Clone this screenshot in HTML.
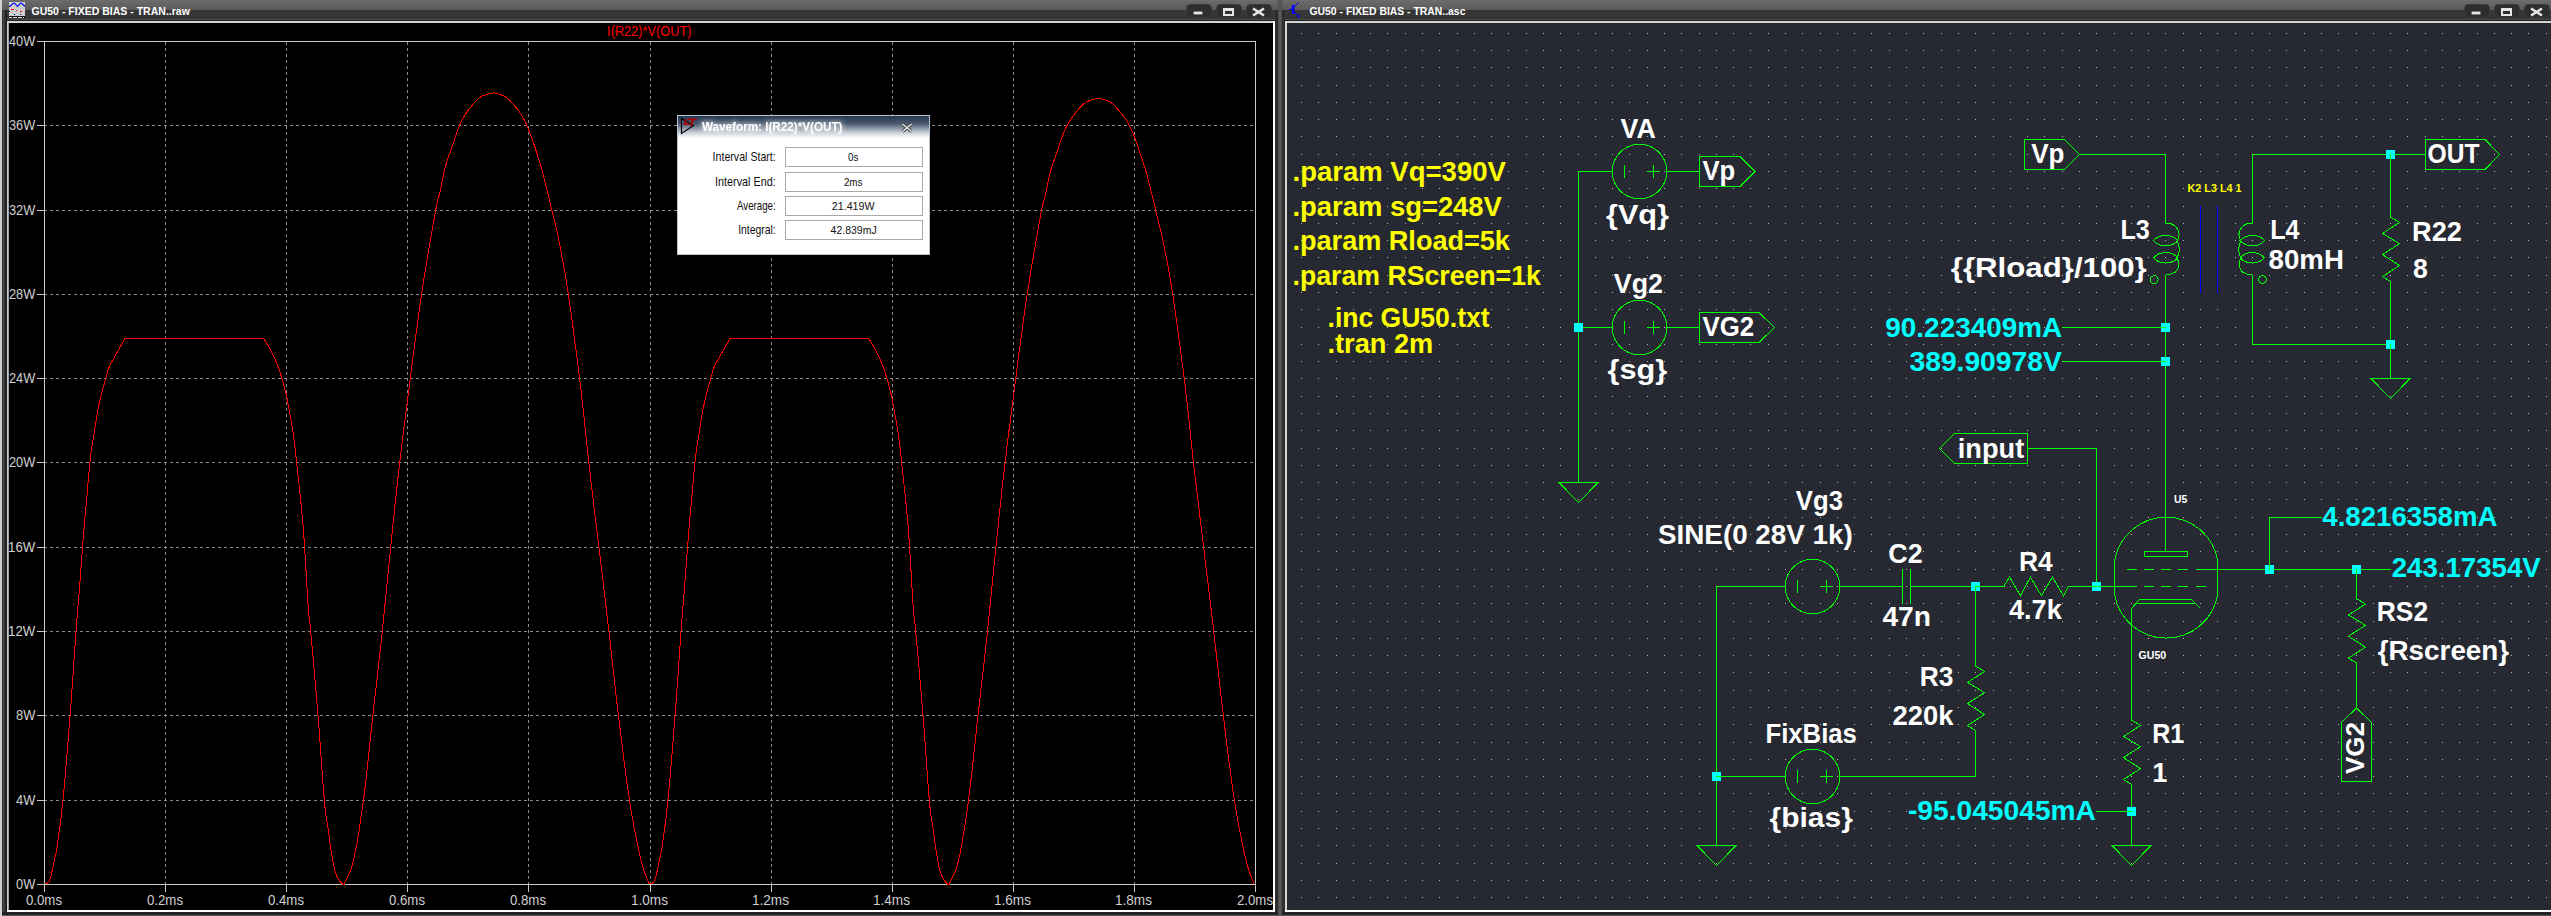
<!DOCTYPE html>
<html><head><meta charset="utf-8"><style>
html,body{margin:0;padding:0;background:#2b2b2b;width:2551px;height:916px;overflow:hidden}
svg{display:block;font-family:"Liberation Sans", sans-serif}
</style></head><body>
<svg width="2551" height="916" viewBox="0 0 2551 916">
<defs><filter id="glow" x="-20%" y="-80%" width="140%" height="260%"><feMorphology in="SourceAlpha" operator="dilate" radius="1" result="d"/><feGaussianBlur in="d" stdDeviation="2.5" result="b"/><feFlood flood-color="#ffffff" flood-opacity="0.45"/><feComposite in2="b" operator="in"/><feMerge><feMergeNode/><feMergeNode in="SourceGraphic"/></feMerge></filter></defs>
<rect x="0" y="0" width="2551" height="916" fill="#2b2b2b" />
<rect x="0" y="0" width="2" height="916" fill="#d0d0d0" />
<defs><linearGradient id="tb" x1="0" y1="0" x2="0" y2="1"><stop offset="0" stop-color="#6c6c6c"/><stop offset="1" stop-color="#5a5a5a"/></linearGradient><linearGradient id="dlg" x1="0" y1="0" x2="0" y2="1"><stop offset="0" stop-color="#24364e"/><stop offset="0.35" stop-color="#4a5a70"/><stop offset="0.75" stop-color="#c8ced6"/><stop offset="1" stop-color="#ffffff"/></linearGradient></defs>
<rect x="2" y="0" width="2549" height="10" fill="url(#tb)" />
<rect x="2" y="10" width="2549" height="9" fill="#363636" />
<rect x="2" y="19" width="2549" height="1" fill="#4a4a4a" />
<rect x="2" y="20" width="2549" height="1" fill="#1e1e1e" />
<rect x="2" y="10" width="1" height="916" fill="#2e2e2e" />
<rect x="3" y="10" width="1" height="916" fill="#4a4a4a" />
<rect x="4" y="10" width="1" height="916" fill="#333333" />
<rect x="5" y="10" width="1" height="916" fill="#2a2a2a" />
<rect x="6" y="10" width="1" height="916" fill="#1c1c1c" />
<rect x="1275" y="10" width="10" height="916" fill="#2d2d2d" />
<rect x="1278" y="0" width="4" height="916" fill="#4c4c4c" />
<rect x="1279" y="0" width="2" height="916" fill="#575757" />
<rect x="7" y="21" width="1268" height="891" fill="#ffffff" />
<rect x="7" y="21" width="1266" height="2" fill="#d4d4d4" />
<rect x="7" y="21" width="1" height="889" fill="#d0d0d0" />
<rect x="8" y="23" width="1" height="887" fill="#a0a0a0" />
<rect x="9" y="23" width="1264" height="887" fill="#000000" />
<rect x="1285" y="21" width="1266" height="891" fill="#ffffff" />
<rect x="1285" y="21" width="1266" height="2" fill="#d4d4d4" />
<rect x="1285" y="21" width="2" height="889" fill="#d4d4d4" />
<rect x="1287" y="23" width="1264" height="887" fill="#262932" />
<rect x="2" y="912" width="2549" height="3" fill="#232323" />
<rect x="2" y="915" width="2549" height="1" fill="#585858" />
<rect x="1278" y="910" width="4" height="6" fill="#4c4c4c" />
<rect x="1279" y="910" width="2" height="6" fill="#575757" />
<rect x="1186.5" y="4.5" width="25" height="13" rx="4" fill="#2e2e2e" stroke="#3a3a3a" stroke-width="1"/>
<rect x="1216.5" y="4.5" width="25" height="13" rx="4" fill="#2e2e2e" stroke="#3a3a3a" stroke-width="1"/>
<rect x="1246.5" y="4.5" width="25" height="13" rx="4" fill="#2e2e2e" stroke="#3a3a3a" stroke-width="1"/>
<rect x="2464.5" y="4.5" width="25" height="13" rx="4" fill="#2e2e2e" stroke="#3a3a3a" stroke-width="1"/>
<rect x="2494.5" y="4.5" width="25" height="13" rx="4" fill="#2e2e2e" stroke="#3a3a3a" stroke-width="1"/>
<rect x="2524.5" y="4.5" width="25" height="13" rx="4" fill="#2e2e2e" stroke="#3a3a3a" stroke-width="1"/>
<rect x="1193" y="11" width="10" height="4" fill="#000" opacity="0.6"/>
<rect x="1193.5" y="11.5" width="9" height="3" fill="#e6e6e6" />
<rect x="1224" y="9" width="9" height="6" fill="none" stroke="#e6e6e6" stroke-width="2"/>
<rect x="1223" y="8" width="11" height="3" fill="#e6e6e6" />
<path d="M1253,8.5 L1264,15.5 M1264,8.5 L1253,15.5" stroke="#e6e6e6" stroke-width="2.6" fill="none"/>
<rect x="2471" y="11" width="10" height="4" fill="#000" opacity="0.6"/>
<rect x="2471.5" y="11.5" width="9" height="3" fill="#e6e6e6" />
<rect x="2502" y="9" width="9" height="6" fill="none" stroke="#e6e6e6" stroke-width="2"/>
<rect x="2501" y="8" width="11" height="3" fill="#e6e6e6" />
<path d="M2531,8.5 L2542,15.5 M2542,8.5 L2531,15.5" stroke="#e6e6e6" stroke-width="2.6" fill="none"/>
<rect x="9" y="2" width="16" height="14" fill="#cccccc" />
<rect x="9" y="16" width="16" height="2" fill="#111111" />
<rect x="9" y="17" width="3" height="1" fill="#d8d8d8" />
<rect x="13" y="17" width="4" height="1" fill="#d8d8d8" />
<rect x="18" y="17" width="4" height="1" fill="#d8d8d8" />
<rect x="23" y="17" width="1" height="1" fill="#d8d8d8" />
<polyline points="9.5,6.5 13.4,3.3 14.7,3.3 17.5,6.5 20.3,3.3 21.6,3.3 24.9,6.5" fill="none" stroke="#0000ff" stroke-width="1.1"/>
<rect x="9" y="6" width="1" height="1" fill="#000000" />
<rect x="9" y="11" width="1" height="1" fill="#000000" />
<rect x="11" y="9" width="3" height="1" fill="#ff0000" />
<rect x="16" y="10" width="1" height="1" fill="#ff0000" />
<rect x="20" y="11" width="2" height="1" fill="#ff0000" />
<rect x="14" y="14" width="1" height="1" fill="#00008b" />
<rect x="20" y="14" width="1" height="1" fill="#00008b" />
<path d="M1289,9.5 L1293,9.5 M1294.5,6.5 L1299,2 M1294.5,12.5 L1300,17.5" stroke="#0000ff" stroke-width="1" fill="none"/>
<rect x="1292" y="5" width="2.5" height="9" fill="#0000ff" />
<polygon points="1300,17.5 1296.5,16.5 1298.5,14" fill="#0000ff"/>
<line x1="165.5" y1="41" x2="165.5" y2="884" stroke="#8c8c8c" stroke-width="1" stroke-dasharray="3 3" stroke-dashoffset="-1"/>
<line x1="286.5" y1="41" x2="286.5" y2="884" stroke="#8c8c8c" stroke-width="1" stroke-dasharray="3 3" stroke-dashoffset="-1"/>
<line x1="407.5" y1="41" x2="407.5" y2="884" stroke="#8c8c8c" stroke-width="1" stroke-dasharray="3 3" stroke-dashoffset="-1"/>
<line x1="528.5" y1="41" x2="528.5" y2="884" stroke="#8c8c8c" stroke-width="1" stroke-dasharray="3 3" stroke-dashoffset="-1"/>
<line x1="650.5" y1="41" x2="650.5" y2="884" stroke="#8c8c8c" stroke-width="1" stroke-dasharray="3 3" stroke-dashoffset="-1"/>
<line x1="771.5" y1="41" x2="771.5" y2="884" stroke="#8c8c8c" stroke-width="1" stroke-dasharray="3 3" stroke-dashoffset="-1"/>
<line x1="892.5" y1="41" x2="892.5" y2="884" stroke="#8c8c8c" stroke-width="1" stroke-dasharray="3 3" stroke-dashoffset="-1"/>
<line x1="1013.5" y1="41" x2="1013.5" y2="884" stroke="#8c8c8c" stroke-width="1" stroke-dasharray="3 3" stroke-dashoffset="-1"/>
<line x1="1134.5" y1="41" x2="1134.5" y2="884" stroke="#8c8c8c" stroke-width="1" stroke-dasharray="3 3" stroke-dashoffset="-1"/>
<line x1="44" y1="125.5" x2="1255" y2="125.5" stroke="#8c8c8c" stroke-width="1" stroke-dasharray="3 3" stroke-dashoffset="0"/>
<line x1="44" y1="210.5" x2="1255" y2="210.5" stroke="#8c8c8c" stroke-width="1" stroke-dasharray="3 3" stroke-dashoffset="0"/>
<line x1="44" y1="294.5" x2="1255" y2="294.5" stroke="#8c8c8c" stroke-width="1" stroke-dasharray="3 3" stroke-dashoffset="0"/>
<line x1="44" y1="378.5" x2="1255" y2="378.5" stroke="#8c8c8c" stroke-width="1" stroke-dasharray="3 3" stroke-dashoffset="0"/>
<line x1="44" y1="462.5" x2="1255" y2="462.5" stroke="#8c8c8c" stroke-width="1" stroke-dasharray="3 3" stroke-dashoffset="0"/>
<line x1="44" y1="547.5" x2="1255" y2="547.5" stroke="#8c8c8c" stroke-width="1" stroke-dasharray="3 3" stroke-dashoffset="0"/>
<line x1="44" y1="631.5" x2="1255" y2="631.5" stroke="#8c8c8c" stroke-width="1" stroke-dasharray="3 3" stroke-dashoffset="0"/>
<line x1="44" y1="715.5" x2="1255" y2="715.5" stroke="#8c8c8c" stroke-width="1" stroke-dasharray="3 3" stroke-dashoffset="0"/>
<line x1="44" y1="800.5" x2="1255" y2="800.5" stroke="#8c8c8c" stroke-width="1" stroke-dasharray="3 3" stroke-dashoffset="0"/>
<rect x="44" y="41" width="1212" height="1" fill="#c8c8c8" />
<rect x="44" y="884" width="1212" height="1" fill="#c8c8c8" />
<rect x="44" y="41" width="1" height="844" fill="#c8c8c8" />
<rect x="1255" y="41" width="1" height="844" fill="#c8c8c8" />
<rect x="37" y="41" width="8" height="1" fill="#c8c8c8" />
<rect x="37" y="125" width="8" height="1" fill="#c8c8c8" />
<rect x="37" y="210" width="8" height="1" fill="#c8c8c8" />
<rect x="37" y="294" width="8" height="1" fill="#c8c8c8" />
<rect x="37" y="378" width="8" height="1" fill="#c8c8c8" />
<rect x="37" y="462" width="8" height="1" fill="#c8c8c8" />
<rect x="37" y="547" width="8" height="1" fill="#c8c8c8" />
<rect x="37" y="631" width="8" height="1" fill="#c8c8c8" />
<rect x="37" y="715" width="8" height="1" fill="#c8c8c8" />
<rect x="37" y="800" width="8" height="1" fill="#c8c8c8" />
<rect x="37" y="884" width="8" height="1" fill="#c8c8c8" />
<rect x="44" y="884" width="1" height="8" fill="#c8c8c8" />
<rect x="165" y="884" width="1" height="8" fill="#c8c8c8" />
<rect x="286" y="884" width="1" height="8" fill="#c8c8c8" />
<rect x="407" y="884" width="1" height="8" fill="#c8c8c8" />
<rect x="528" y="884" width="1" height="8" fill="#c8c8c8" />
<rect x="650" y="884" width="1" height="8" fill="#c8c8c8" />
<rect x="771" y="884" width="1" height="8" fill="#c8c8c8" />
<rect x="892" y="884" width="1" height="8" fill="#c8c8c8" />
<rect x="1013" y="884" width="1" height="8" fill="#c8c8c8" />
<rect x="1134" y="884" width="1" height="8" fill="#c8c8c8" />
<rect x="1255" y="884" width="1" height="8" fill="#c8c8c8" />
<polyline points="44.60,884.10 44.92,884.00 45.38,883.86 45.92,883.70 46.49,883.50 47.03,883.27 47.50,883.00 47.89,882.75 48.25,882.53 48.59,882.27 48.91,881.91 49.25,881.37 49.60,880.60 49.97,879.57 50.34,878.34 50.71,876.94 51.10,875.40 51.49,873.74 51.90,872.00 52.33,870.14 52.77,868.12 53.23,865.99 53.69,863.78 54.15,861.54 54.60,859.30 55.00,857.40 55.36,855.87 55.71,854.30 56.11,852.29 56.59,849.42 57.20,845.30 57.95,840.10 58.81,834.17 59.76,827.40 60.77,819.64 61.83,810.75 62.90,800.60 64.03,788.73 65.24,775.15 66.49,760.44 67.74,745.20 68.96,729.99 70.10,715.40 71.19,700.86 72.26,685.80 73.29,670.77 74.27,656.36 75.18,643.11 76.00,631.60 76.70,622.28 77.29,614.77 77.80,608.44 78.28,602.63 78.77,596.70 79.30,590.00 79.88,582.48 80.47,574.65 81.06,566.69 81.66,558.81 82.24,551.18 82.80,544.00 83.32,537.49 83.81,531.53 84.29,525.83 84.78,520.09 85.31,514.02 85.90,507.30 86.59,499.54 87.35,490.89 88.15,481.89 88.95,473.11 89.71,465.10 90.40,458.40 91.00,453.22 91.54,449.17 92.04,445.89 92.52,443.00 93.00,440.16 93.50,437.00 94.03,433.50 94.57,429.94 95.11,426.42 95.64,423.04 96.14,419.90 96.60,417.10 96.99,414.78 97.30,412.88 97.59,411.22 97.90,409.61 98.25,407.87 98.70,405.80 99.25,403.39 99.87,400.79 100.54,398.04 101.25,395.23 101.98,392.39 102.70,389.60 103.44,386.75 104.23,383.76 105.02,380.76 105.82,377.86 106.58,375.17 107.30,372.80 107.84,371.01 108.19,369.76 108.51,368.72 108.96,367.56 109.70,365.97 110.90,363.60 112.81,360.05 115.34,355.48 118.18,350.48 120.96,345.60 123.34,341.41 125.00,338.50 262.60,338.50 262.91,338.70 263.27,338.80 263.73,339.01 264.34,339.52 265.15,340.52 266.20,342.20 267.61,344.71 269.35,347.91 271.29,351.61 273.29,355.59 275.21,359.65 276.90,363.60 278.40,367.58 279.84,371.79 281.19,376.08 282.45,380.31 283.59,384.33 284.60,388.00 285.42,391.07 286.03,393.63 286.54,395.97 287.01,398.42 287.54,401.29 288.20,404.90 289.03,409.42 289.98,414.64 290.98,420.29 291.97,426.08 292.90,431.74 293.70,437.00 294.34,441.67 294.86,445.94 295.31,450.08 295.74,454.37 296.22,459.08 296.80,464.50 297.50,470.82 298.28,477.86 299.11,485.33 299.93,492.92 300.71,500.34 301.40,507.30 301.98,513.43 302.48,518.90 302.94,524.20 303.39,529.82 303.86,536.26 304.40,544.00 305.03,553.82 305.72,565.49 306.44,577.96 307.16,590.23 307.82,601.25 308.40,610.00 308.82,615.41 309.11,618.09 309.34,619.53 309.63,621.22 310.05,624.64 310.70,631.30 311.64,641.65 312.80,654.60 314.10,669.28 315.46,684.85 316.78,700.44 318.00,715.20 319.14,729.94 320.27,745.50 321.37,761.09 322.43,775.91 323.41,789.14 324.30,800.00 325.04,807.80 325.63,813.06 326.14,816.74 326.66,819.81 327.26,823.24 328.00,828.00 328.89,834.38 329.88,841.67 330.94,849.31 332.06,856.78 333.22,863.52 334.40,869.00 335.68,873.21 337.09,876.59 338.54,879.25 339.95,881.30 341.23,882.84 342.30,884.00 343.06,884.50 343.56,884.50 343.93,884.50 344.30,884.09 344.81,882.82 345.60,881.00 346.68,878.83 347.95,876.36 349.36,873.36 350.86,869.59 352.39,864.82 353.90,858.80 355.41,851.47 356.98,843.01 358.57,833.54 360.19,823.19 361.80,812.10 363.40,800.40 364.98,787.74 366.57,773.94 368.16,759.41 369.74,744.51 371.32,729.65 372.90,715.20 374.48,701.12 376.08,687.09 377.67,673.08 379.24,659.09 380.79,645.10 382.30,631.10 383.75,617.08 385.16,603.04 386.53,589.01 387.90,574.99 389.28,560.98 390.70,547.00 392.14,532.99 393.59,518.94 395.06,504.90 396.54,490.94 398.05,477.12 399.60,463.50 401.17,450.27 402.74,437.43 404.35,424.72 406.00,411.91 407.71,398.75 409.50,385.00 411.37,370.46 413.30,355.30 415.29,339.78 417.34,324.19 419.44,308.81 421.60,293.90 423.95,278.75 426.51,263.00 429.14,247.45 431.65,232.91 433.89,220.19 435.70,210.10 436.97,203.33 437.83,199.38 438.41,197.24 438.86,195.93 439.34,194.45 440.00,191.80 440.79,188.03 441.60,183.96 442.43,179.71 443.30,175.43 444.22,171.25 445.20,167.30 446.26,163.60 447.40,160.04 448.59,156.57 449.80,153.17 451.01,149.80 452.20,146.40 453.37,142.92 454.53,139.38 455.70,135.86 456.87,132.45 458.03,129.24 459.20,126.30 460.33,123.71 461.40,121.41 462.48,119.31 463.61,117.31 464.83,115.30 466.20,113.20 467.79,110.92 469.57,108.52 471.45,106.13 473.33,103.84 475.11,101.80 476.70,100.10 478.05,98.80 479.23,97.82 480.31,97.07 481.37,96.48 482.48,95.95 483.70,95.40 485.09,94.85 486.60,94.35 488.16,93.92 489.70,93.57 491.13,93.29 492.40,93.10 493.43,92.98 494.26,92.93 494.99,92.96 495.73,93.08 496.57,93.29 497.60,93.60 498.88,94.02 500.33,94.53 501.89,95.14 503.47,95.84 505.00,96.63 506.40,97.50 507.67,98.47 508.87,99.54 510.02,100.70 511.14,101.93 512.26,103.20 513.40,104.50 514.55,105.80 515.70,107.11 516.85,108.47 518.00,109.91 519.15,111.48 520.30,113.20 521.45,115.03 522.59,116.92 523.74,118.93 524.90,121.13 526.08,123.56 527.30,126.30 528.57,129.42 529.90,132.89 531.25,136.60 532.60,140.44 533.92,144.31 535.20,148.10 536.39,151.64 537.50,154.99 538.59,158.36 539.71,161.97 540.89,166.05 542.20,170.80 543.68,176.50 545.30,183.02 547.00,190.00 548.70,197.08 550.32,203.90 551.80,210.10 553.09,215.35 554.23,219.87 555.31,224.14 556.38,228.60 557.52,233.74 558.80,240.00 560.21,247.16 561.69,254.81 563.23,263.12 564.85,272.29 566.54,282.49 568.30,293.90 570.21,307.08 572.27,321.98 574.41,337.91 576.54,354.19 578.56,370.12 580.40,385.00 582.01,398.75 583.44,411.91 584.78,424.73 586.09,437.43 587.44,450.27 588.90,463.50 590.48,477.12 592.12,490.94 593.81,504.90 595.51,518.94 597.22,532.99 598.90,547.00 600.57,560.98 602.25,574.99 603.93,589.01 605.60,603.04 607.26,617.08 608.90,631.10 610.49,645.10 612.04,659.09 613.58,673.08 615.13,687.09 616.73,701.12 618.40,715.20 620.16,729.65 621.98,744.51 623.84,759.41 625.73,773.94 627.63,787.74 629.50,800.40 631.39,812.07 633.33,823.08 635.28,833.35 637.18,842.79 639.00,851.30 640.70,858.80 642.35,865.21 643.99,870.59 645.55,875.05 646.96,878.70 648.13,881.64 649.00,884.00 652.50,883.00 652.73,882.81 653.04,882.61 653.41,882.34 653.81,881.95 654.21,881.39 654.60,880.60 654.97,879.57 655.34,878.34 655.71,876.94 656.10,875.40 656.49,873.74 656.90,872.00 657.33,870.14 657.77,868.12 658.23,865.99 658.69,863.78 659.15,861.54 659.60,859.30 660.00,857.40 660.36,855.87 660.71,854.30 661.11,852.29 661.59,849.42 662.20,845.30 662.95,840.10 663.81,834.17 664.76,827.40 665.77,819.64 666.83,810.75 667.90,800.60 669.03,788.73 670.24,775.15 671.49,760.44 672.74,745.20 673.96,729.99 675.10,715.40 676.19,700.86 677.26,685.80 678.29,670.77 679.27,656.36 680.18,643.11 681.00,631.60 681.70,622.28 682.29,614.77 682.80,608.44 683.28,602.63 683.77,596.70 684.30,590.00 684.88,582.48 685.47,574.65 686.06,566.69 686.66,558.81 687.24,551.18 687.80,544.00 688.32,537.49 688.81,531.53 689.29,525.83 689.78,520.09 690.31,514.02 690.90,507.30 691.59,499.54 692.35,490.89 693.15,481.89 693.95,473.11 694.71,465.10 695.40,458.40 696.00,453.22 696.54,449.17 697.04,445.89 697.52,443.00 698.00,440.16 698.50,437.00 699.03,433.50 699.57,429.94 700.11,426.42 700.64,423.04 701.14,419.90 701.60,417.10 701.99,414.78 702.30,412.88 702.59,411.22 702.90,409.61 703.25,407.87 703.70,405.80 704.25,403.39 704.87,400.79 705.54,398.04 706.25,395.23 706.98,392.39 707.70,389.60 708.44,386.75 709.23,383.76 710.03,380.76 710.82,377.86 711.58,375.17 712.30,372.80 712.84,371.01 713.19,369.76 713.51,368.72 713.96,367.56 714.70,365.97 715.90,363.60 717.81,360.05 720.34,355.48 723.18,350.48 725.96,345.60 728.34,341.41 730.00,338.50 867.60,338.50 867.91,338.70 868.27,338.80 868.73,339.01 869.34,339.52 870.15,340.52 871.20,342.20 872.61,344.71 874.35,347.91 876.29,351.61 878.29,355.59 880.21,359.65 881.90,363.60 883.40,367.58 884.84,371.79 886.19,376.08 887.45,380.31 888.59,384.33 889.60,388.00 890.42,391.07 891.03,393.63 891.54,395.97 892.01,398.42 892.54,401.29 893.20,404.90 894.03,409.42 894.98,414.64 895.98,420.29 896.97,426.08 897.90,431.74 898.70,437.00 899.34,441.67 899.86,445.94 900.31,450.08 900.74,454.37 901.22,459.08 901.80,464.50 902.50,470.82 903.28,477.86 904.11,485.33 904.93,492.92 905.71,500.34 906.40,507.30 906.98,513.43 907.48,518.90 907.94,524.20 908.39,529.82 908.86,536.26 909.40,544.00 910.03,553.82 910.72,565.49 911.44,577.96 912.16,590.23 912.82,601.25 913.40,610.00 913.82,615.41 914.11,618.09 914.34,619.53 914.63,621.22 915.05,624.64 915.70,631.30 916.64,641.65 917.80,654.60 919.10,669.28 920.46,684.85 921.78,700.44 923.00,715.20 924.14,729.94 925.27,745.50 926.37,761.09 927.43,775.91 928.41,789.14 929.30,800.00 930.04,807.80 930.63,813.06 931.14,816.74 931.66,819.81 932.26,823.24 933.00,828.00 933.89,834.38 934.88,841.67 935.94,849.31 937.06,856.78 938.22,863.52 939.40,869.00 940.68,873.21 942.09,876.59 943.54,879.25 944.95,881.29 946.23,882.84 947.30,884.00 948.06,884.50 948.56,884.50 948.92,884.50 949.30,884.09 949.81,882.83 950.60,881.02 951.68,878.87 952.95,876.42 954.36,873.44 955.86,869.69 957.39,864.95 958.90,858.98 960.41,851.70 961.98,843.30 963.57,833.89 965.19,823.62 966.80,812.61 968.40,800.99 969.98,788.41 971.57,774.72 973.16,760.28 974.74,745.49 976.32,730.73 977.90,716.38 979.48,702.40 981.08,688.47 982.67,674.56 984.24,660.67 985.79,646.78 987.30,632.87 988.75,618.95 990.16,605.02 991.53,591.08 992.90,577.16 994.28,563.25 995.70,549.37 997.14,535.45 998.59,521.50 1000.06,507.56 1001.54,493.70 1003.05,479.98 1004.60,466.45 1006.17,453.32 1007.74,440.56 1009.35,427.95 1011.00,415.23 1012.71,402.16 1014.50,388.50 1016.37,374.07 1018.30,359.01 1020.29,343.60 1022.34,328.12 1024.44,312.84 1026.60,298.04 1028.95,283.00 1031.51,267.36 1034.14,251.92 1036.65,237.48 1038.89,224.85 1040.70,214.83 1041.97,208.11 1042.83,204.18 1043.41,202.06 1043.86,200.76 1044.34,199.29 1045.00,196.66 1045.79,192.92 1046.60,188.87 1047.43,184.66 1048.30,180.40 1049.22,176.25 1050.20,172.33 1051.26,168.65 1052.40,165.12 1053.59,161.68 1054.80,158.30 1056.01,154.95 1057.20,151.58 1058.37,148.12 1059.53,144.61 1060.70,141.11 1061.87,137.73 1063.03,134.53 1064.20,131.62 1065.33,129.05 1066.40,126.77 1067.48,124.68 1068.61,122.69 1069.83,120.70 1071.20,118.61 1072.79,116.35 1074.57,113.96 1076.45,111.58 1078.33,109.32 1080.11,107.29 1081.70,105.60 1083.05,104.31 1084.23,103.34 1085.31,102.60 1086.37,102.00 1087.48,101.48 1088.70,100.93 1090.09,100.38 1091.60,99.89 1093.16,99.47 1094.70,99.12 1096.13,98.84 1097.40,98.65 1098.43,98.53 1099.26,98.49 1099.99,98.51 1100.73,98.63 1101.57,98.84 1102.60,99.15 1103.88,99.56 1105.33,100.07 1106.89,100.68 1108.47,101.38 1110.00,102.16 1111.40,103.02 1112.67,103.98 1113.87,105.05 1115.02,106.20 1116.14,107.41 1117.26,108.68 1118.40,109.97 1119.55,111.26 1120.70,112.56 1121.85,113.91 1123.00,115.34 1124.15,116.90 1125.30,118.61 1126.45,120.42 1127.59,122.30 1128.74,124.30 1129.90,126.48 1131.08,128.90 1132.30,131.62 1133.57,134.72 1134.90,138.16 1136.25,141.85 1137.60,145.66 1138.92,149.51 1140.20,153.26 1141.39,156.78 1142.50,160.10 1143.59,163.45 1144.71,167.04 1145.89,171.08 1147.20,175.81 1148.68,181.46 1150.30,187.94 1152.00,194.87 1153.70,201.90 1155.32,208.67 1156.80,214.83 1158.09,220.04 1159.23,224.54 1160.31,228.77 1161.38,233.20 1162.52,238.30 1163.80,244.52 1165.21,251.63 1166.69,259.23 1168.23,267.48 1169.85,276.58 1171.54,286.71 1173.30,298.04 1175.21,311.13 1177.27,325.92 1179.41,341.75 1181.54,357.91 1183.56,373.72 1185.40,388.50 1187.01,402.16 1188.44,415.23 1189.78,427.95 1191.09,440.56 1192.44,453.32 1193.90,466.45 1195.48,479.98 1197.12,493.70 1198.81,507.56 1200.51,521.50 1202.22,535.45 1203.90,549.37 1205.57,563.25 1207.25,577.16 1208.93,591.08 1210.60,605.02 1212.26,618.95 1213.90,632.87 1215.49,646.78 1217.04,660.67 1218.58,674.56 1220.13,688.47 1221.73,702.40 1223.40,716.38 1225.16,730.73 1226.98,745.49 1228.84,760.28 1230.73,774.72 1232.63,788.41 1234.50,800.99 1236.39,812.57 1238.33,823.51 1240.28,833.71 1242.18,843.07 1244.00,851.53 1245.70,858.98 1247.35,865.34 1248.99,870.69 1250.55,875.11 1251.96,878.73 1253.13,881.66 1254.00,884.00" fill="none" stroke="#ff0000" stroke-width="1" shape-rendering="crispEdges" stroke-linejoin="round"/>
<rect x="677" y="115" width="253" height="140" fill="#ffffff" />
<rect x="677.5" y="115.5" width="252" height="139" fill="none" stroke="#b9c3cf" stroke-width="1"/>
<rect x="678" y="116" width="251" height="22" fill="url(#dlg)" />
<polygon points="681.5,118.5 681.5,133.5 693.5,125.5" fill="none" stroke="#000000" stroke-width="1.2"/>
<polygon points="685.5,119 687.5,119 685.8,123.5 689.5,123.5 689,125 683.5,125" fill="#b00000"/>
<polygon points="688.5,118.5 697,118.5 696.3,120.3 693.8,120.3 691.5,126 689.6,126 691.9,120.3 688,120.3" fill="#b00000"/>
<path d="M902.5,124 L911.5,131.5 M911.5,124 L902.5,131.5" stroke="#3a3a3a" stroke-width="3.2" fill="none"/>
<path d="M902.5,124 L911.5,131.5 M911.5,124 L902.5,131.5" stroke="#e8e8e8" stroke-width="1.6" fill="none"/>
<rect x="785.5" y="147.5" width="137" height="19" fill="#ffffff" stroke="#a9a9a9" stroke-width="1"/>
<rect x="785.5" y="172.5" width="137" height="19" fill="#ffffff" stroke="#a9a9a9" stroke-width="1"/>
<rect x="785.5" y="196.5" width="137" height="19" fill="#ffffff" stroke="#a9a9a9" stroke-width="1"/>
<rect x="785.5" y="220.5" width="137" height="19" fill="#ffffff" stroke="#a9a9a9" stroke-width="1"/>
<path d="M1301,33h1v1h-1zM1301,50h1v1h-1zM1301,67h1v1h-1zM1301,85h1v1h-1zM1301,102h1v1h-1zM1301,119h1v1h-1zM1301,136h1v1h-1zM1301,154h1v1h-1zM1301,171h1v1h-1zM1301,188h1v1h-1zM1301,206h1v1h-1zM1301,223h1v1h-1zM1301,240h1v1h-1zM1301,257h1v1h-1zM1301,275h1v1h-1zM1301,292h1v1h-1zM1301,309h1v1h-1zM1301,327h1v1h-1zM1301,344h1v1h-1zM1301,361h1v1h-1zM1301,378h1v1h-1zM1301,396h1v1h-1zM1301,413h1v1h-1zM1301,430h1v1h-1zM1301,448h1v1h-1zM1301,465h1v1h-1zM1301,482h1v1h-1zM1301,499h1v1h-1zM1301,517h1v1h-1zM1301,534h1v1h-1zM1301,551h1v1h-1zM1301,569h1v1h-1zM1301,586h1v1h-1zM1301,603h1v1h-1zM1301,621h1v1h-1zM1301,638h1v1h-1zM1301,655h1v1h-1zM1301,672h1v1h-1zM1301,690h1v1h-1zM1301,707h1v1h-1zM1301,724h1v1h-1zM1301,742h1v1h-1zM1301,759h1v1h-1zM1301,776h1v1h-1zM1301,793h1v1h-1zM1301,811h1v1h-1zM1301,828h1v1h-1zM1301,845h1v1h-1zM1301,863h1v1h-1zM1301,880h1v1h-1zM1301,897h1v1h-1zM1318,33h1v1h-1zM1318,50h1v1h-1zM1318,67h1v1h-1zM1318,85h1v1h-1zM1318,102h1v1h-1zM1318,119h1v1h-1zM1318,136h1v1h-1zM1318,154h1v1h-1zM1318,171h1v1h-1zM1318,188h1v1h-1zM1318,206h1v1h-1zM1318,223h1v1h-1zM1318,240h1v1h-1zM1318,257h1v1h-1zM1318,275h1v1h-1zM1318,292h1v1h-1zM1318,309h1v1h-1zM1318,327h1v1h-1zM1318,344h1v1h-1zM1318,361h1v1h-1zM1318,378h1v1h-1zM1318,396h1v1h-1zM1318,413h1v1h-1zM1318,430h1v1h-1zM1318,448h1v1h-1zM1318,465h1v1h-1zM1318,482h1v1h-1zM1318,499h1v1h-1zM1318,517h1v1h-1zM1318,534h1v1h-1zM1318,551h1v1h-1zM1318,569h1v1h-1zM1318,586h1v1h-1zM1318,603h1v1h-1zM1318,621h1v1h-1zM1318,638h1v1h-1zM1318,655h1v1h-1zM1318,672h1v1h-1zM1318,690h1v1h-1zM1318,707h1v1h-1zM1318,724h1v1h-1zM1318,742h1v1h-1zM1318,759h1v1h-1zM1318,776h1v1h-1zM1318,793h1v1h-1zM1318,811h1v1h-1zM1318,828h1v1h-1zM1318,845h1v1h-1zM1318,863h1v1h-1zM1318,880h1v1h-1zM1318,897h1v1h-1zM1336,33h1v1h-1zM1336,50h1v1h-1zM1336,67h1v1h-1zM1336,85h1v1h-1zM1336,102h1v1h-1zM1336,119h1v1h-1zM1336,136h1v1h-1zM1336,154h1v1h-1zM1336,171h1v1h-1zM1336,188h1v1h-1zM1336,206h1v1h-1zM1336,223h1v1h-1zM1336,240h1v1h-1zM1336,257h1v1h-1zM1336,275h1v1h-1zM1336,292h1v1h-1zM1336,309h1v1h-1zM1336,327h1v1h-1zM1336,344h1v1h-1zM1336,361h1v1h-1zM1336,378h1v1h-1zM1336,396h1v1h-1zM1336,413h1v1h-1zM1336,430h1v1h-1zM1336,448h1v1h-1zM1336,465h1v1h-1zM1336,482h1v1h-1zM1336,499h1v1h-1zM1336,517h1v1h-1zM1336,534h1v1h-1zM1336,551h1v1h-1zM1336,569h1v1h-1zM1336,586h1v1h-1zM1336,603h1v1h-1zM1336,621h1v1h-1zM1336,638h1v1h-1zM1336,655h1v1h-1zM1336,672h1v1h-1zM1336,690h1v1h-1zM1336,707h1v1h-1zM1336,724h1v1h-1zM1336,742h1v1h-1zM1336,759h1v1h-1zM1336,776h1v1h-1zM1336,793h1v1h-1zM1336,811h1v1h-1zM1336,828h1v1h-1zM1336,845h1v1h-1zM1336,863h1v1h-1zM1336,880h1v1h-1zM1336,897h1v1h-1zM1353,33h1v1h-1zM1353,50h1v1h-1zM1353,67h1v1h-1zM1353,85h1v1h-1zM1353,102h1v1h-1zM1353,119h1v1h-1zM1353,136h1v1h-1zM1353,154h1v1h-1zM1353,171h1v1h-1zM1353,188h1v1h-1zM1353,206h1v1h-1zM1353,223h1v1h-1zM1353,240h1v1h-1zM1353,257h1v1h-1zM1353,275h1v1h-1zM1353,292h1v1h-1zM1353,309h1v1h-1zM1353,327h1v1h-1zM1353,344h1v1h-1zM1353,361h1v1h-1zM1353,378h1v1h-1zM1353,396h1v1h-1zM1353,413h1v1h-1zM1353,430h1v1h-1zM1353,448h1v1h-1zM1353,465h1v1h-1zM1353,482h1v1h-1zM1353,499h1v1h-1zM1353,517h1v1h-1zM1353,534h1v1h-1zM1353,551h1v1h-1zM1353,569h1v1h-1zM1353,586h1v1h-1zM1353,603h1v1h-1zM1353,621h1v1h-1zM1353,638h1v1h-1zM1353,655h1v1h-1zM1353,672h1v1h-1zM1353,690h1v1h-1zM1353,707h1v1h-1zM1353,724h1v1h-1zM1353,742h1v1h-1zM1353,759h1v1h-1zM1353,776h1v1h-1zM1353,793h1v1h-1zM1353,811h1v1h-1zM1353,828h1v1h-1zM1353,845h1v1h-1zM1353,863h1v1h-1zM1353,880h1v1h-1zM1353,897h1v1h-1zM1370,33h1v1h-1zM1370,50h1v1h-1zM1370,67h1v1h-1zM1370,85h1v1h-1zM1370,102h1v1h-1zM1370,119h1v1h-1zM1370,136h1v1h-1zM1370,154h1v1h-1zM1370,171h1v1h-1zM1370,188h1v1h-1zM1370,206h1v1h-1zM1370,223h1v1h-1zM1370,240h1v1h-1zM1370,257h1v1h-1zM1370,275h1v1h-1zM1370,292h1v1h-1zM1370,309h1v1h-1zM1370,327h1v1h-1zM1370,344h1v1h-1zM1370,361h1v1h-1zM1370,378h1v1h-1zM1370,396h1v1h-1zM1370,413h1v1h-1zM1370,430h1v1h-1zM1370,448h1v1h-1zM1370,465h1v1h-1zM1370,482h1v1h-1zM1370,499h1v1h-1zM1370,517h1v1h-1zM1370,534h1v1h-1zM1370,551h1v1h-1zM1370,569h1v1h-1zM1370,586h1v1h-1zM1370,603h1v1h-1zM1370,621h1v1h-1zM1370,638h1v1h-1zM1370,655h1v1h-1zM1370,672h1v1h-1zM1370,690h1v1h-1zM1370,707h1v1h-1zM1370,724h1v1h-1zM1370,742h1v1h-1zM1370,759h1v1h-1zM1370,776h1v1h-1zM1370,793h1v1h-1zM1370,811h1v1h-1zM1370,828h1v1h-1zM1370,845h1v1h-1zM1370,863h1v1h-1zM1370,880h1v1h-1zM1370,897h1v1h-1zM1387,33h1v1h-1zM1387,50h1v1h-1zM1387,67h1v1h-1zM1387,85h1v1h-1zM1387,102h1v1h-1zM1387,119h1v1h-1zM1387,136h1v1h-1zM1387,154h1v1h-1zM1387,171h1v1h-1zM1387,188h1v1h-1zM1387,206h1v1h-1zM1387,223h1v1h-1zM1387,240h1v1h-1zM1387,257h1v1h-1zM1387,275h1v1h-1zM1387,292h1v1h-1zM1387,309h1v1h-1zM1387,327h1v1h-1zM1387,344h1v1h-1zM1387,361h1v1h-1zM1387,378h1v1h-1zM1387,396h1v1h-1zM1387,413h1v1h-1zM1387,430h1v1h-1zM1387,448h1v1h-1zM1387,465h1v1h-1zM1387,482h1v1h-1zM1387,499h1v1h-1zM1387,517h1v1h-1zM1387,534h1v1h-1zM1387,551h1v1h-1zM1387,569h1v1h-1zM1387,586h1v1h-1zM1387,603h1v1h-1zM1387,621h1v1h-1zM1387,638h1v1h-1zM1387,655h1v1h-1zM1387,672h1v1h-1zM1387,690h1v1h-1zM1387,707h1v1h-1zM1387,724h1v1h-1zM1387,742h1v1h-1zM1387,759h1v1h-1zM1387,776h1v1h-1zM1387,793h1v1h-1zM1387,811h1v1h-1zM1387,828h1v1h-1zM1387,845h1v1h-1zM1387,863h1v1h-1zM1387,880h1v1h-1zM1387,897h1v1h-1zM1405,33h1v1h-1zM1405,50h1v1h-1zM1405,67h1v1h-1zM1405,85h1v1h-1zM1405,102h1v1h-1zM1405,119h1v1h-1zM1405,136h1v1h-1zM1405,154h1v1h-1zM1405,171h1v1h-1zM1405,188h1v1h-1zM1405,206h1v1h-1zM1405,223h1v1h-1zM1405,240h1v1h-1zM1405,257h1v1h-1zM1405,275h1v1h-1zM1405,292h1v1h-1zM1405,309h1v1h-1zM1405,327h1v1h-1zM1405,344h1v1h-1zM1405,361h1v1h-1zM1405,378h1v1h-1zM1405,396h1v1h-1zM1405,413h1v1h-1zM1405,430h1v1h-1zM1405,448h1v1h-1zM1405,465h1v1h-1zM1405,482h1v1h-1zM1405,499h1v1h-1zM1405,517h1v1h-1zM1405,534h1v1h-1zM1405,551h1v1h-1zM1405,569h1v1h-1zM1405,586h1v1h-1zM1405,603h1v1h-1zM1405,621h1v1h-1zM1405,638h1v1h-1zM1405,655h1v1h-1zM1405,672h1v1h-1zM1405,690h1v1h-1zM1405,707h1v1h-1zM1405,724h1v1h-1zM1405,742h1v1h-1zM1405,759h1v1h-1zM1405,776h1v1h-1zM1405,793h1v1h-1zM1405,811h1v1h-1zM1405,828h1v1h-1zM1405,845h1v1h-1zM1405,863h1v1h-1zM1405,880h1v1h-1zM1405,897h1v1h-1zM1422,33h1v1h-1zM1422,50h1v1h-1zM1422,67h1v1h-1zM1422,85h1v1h-1zM1422,102h1v1h-1zM1422,119h1v1h-1zM1422,136h1v1h-1zM1422,154h1v1h-1zM1422,171h1v1h-1zM1422,188h1v1h-1zM1422,206h1v1h-1zM1422,223h1v1h-1zM1422,240h1v1h-1zM1422,257h1v1h-1zM1422,275h1v1h-1zM1422,292h1v1h-1zM1422,309h1v1h-1zM1422,327h1v1h-1zM1422,344h1v1h-1zM1422,361h1v1h-1zM1422,378h1v1h-1zM1422,396h1v1h-1zM1422,413h1v1h-1zM1422,430h1v1h-1zM1422,448h1v1h-1zM1422,465h1v1h-1zM1422,482h1v1h-1zM1422,499h1v1h-1zM1422,517h1v1h-1zM1422,534h1v1h-1zM1422,551h1v1h-1zM1422,569h1v1h-1zM1422,586h1v1h-1zM1422,603h1v1h-1zM1422,621h1v1h-1zM1422,638h1v1h-1zM1422,655h1v1h-1zM1422,672h1v1h-1zM1422,690h1v1h-1zM1422,707h1v1h-1zM1422,724h1v1h-1zM1422,742h1v1h-1zM1422,759h1v1h-1zM1422,776h1v1h-1zM1422,793h1v1h-1zM1422,811h1v1h-1zM1422,828h1v1h-1zM1422,845h1v1h-1zM1422,863h1v1h-1zM1422,880h1v1h-1zM1422,897h1v1h-1zM1439,33h1v1h-1zM1439,50h1v1h-1zM1439,67h1v1h-1zM1439,85h1v1h-1zM1439,102h1v1h-1zM1439,119h1v1h-1zM1439,136h1v1h-1zM1439,154h1v1h-1zM1439,171h1v1h-1zM1439,188h1v1h-1zM1439,206h1v1h-1zM1439,223h1v1h-1zM1439,240h1v1h-1zM1439,257h1v1h-1zM1439,275h1v1h-1zM1439,292h1v1h-1zM1439,309h1v1h-1zM1439,327h1v1h-1zM1439,344h1v1h-1zM1439,361h1v1h-1zM1439,378h1v1h-1zM1439,396h1v1h-1zM1439,413h1v1h-1zM1439,430h1v1h-1zM1439,448h1v1h-1zM1439,465h1v1h-1zM1439,482h1v1h-1zM1439,499h1v1h-1zM1439,517h1v1h-1zM1439,534h1v1h-1zM1439,551h1v1h-1zM1439,569h1v1h-1zM1439,586h1v1h-1zM1439,603h1v1h-1zM1439,621h1v1h-1zM1439,638h1v1h-1zM1439,655h1v1h-1zM1439,672h1v1h-1zM1439,690h1v1h-1zM1439,707h1v1h-1zM1439,724h1v1h-1zM1439,742h1v1h-1zM1439,759h1v1h-1zM1439,776h1v1h-1zM1439,793h1v1h-1zM1439,811h1v1h-1zM1439,828h1v1h-1zM1439,845h1v1h-1zM1439,863h1v1h-1zM1439,880h1v1h-1zM1439,897h1v1h-1zM1457,33h1v1h-1zM1457,50h1v1h-1zM1457,67h1v1h-1zM1457,85h1v1h-1zM1457,102h1v1h-1zM1457,119h1v1h-1zM1457,136h1v1h-1zM1457,154h1v1h-1zM1457,171h1v1h-1zM1457,188h1v1h-1zM1457,206h1v1h-1zM1457,223h1v1h-1zM1457,240h1v1h-1zM1457,257h1v1h-1zM1457,275h1v1h-1zM1457,292h1v1h-1zM1457,309h1v1h-1zM1457,327h1v1h-1zM1457,344h1v1h-1zM1457,361h1v1h-1zM1457,378h1v1h-1zM1457,396h1v1h-1zM1457,413h1v1h-1zM1457,430h1v1h-1zM1457,448h1v1h-1zM1457,465h1v1h-1zM1457,482h1v1h-1zM1457,499h1v1h-1zM1457,517h1v1h-1zM1457,534h1v1h-1zM1457,551h1v1h-1zM1457,569h1v1h-1zM1457,586h1v1h-1zM1457,603h1v1h-1zM1457,621h1v1h-1zM1457,638h1v1h-1zM1457,655h1v1h-1zM1457,672h1v1h-1zM1457,690h1v1h-1zM1457,707h1v1h-1zM1457,724h1v1h-1zM1457,742h1v1h-1zM1457,759h1v1h-1zM1457,776h1v1h-1zM1457,793h1v1h-1zM1457,811h1v1h-1zM1457,828h1v1h-1zM1457,845h1v1h-1zM1457,863h1v1h-1zM1457,880h1v1h-1zM1457,897h1v1h-1zM1474,33h1v1h-1zM1474,50h1v1h-1zM1474,67h1v1h-1zM1474,85h1v1h-1zM1474,102h1v1h-1zM1474,119h1v1h-1zM1474,136h1v1h-1zM1474,154h1v1h-1zM1474,171h1v1h-1zM1474,188h1v1h-1zM1474,206h1v1h-1zM1474,223h1v1h-1zM1474,240h1v1h-1zM1474,257h1v1h-1zM1474,275h1v1h-1zM1474,292h1v1h-1zM1474,309h1v1h-1zM1474,327h1v1h-1zM1474,344h1v1h-1zM1474,361h1v1h-1zM1474,378h1v1h-1zM1474,396h1v1h-1zM1474,413h1v1h-1zM1474,430h1v1h-1zM1474,448h1v1h-1zM1474,465h1v1h-1zM1474,482h1v1h-1zM1474,499h1v1h-1zM1474,517h1v1h-1zM1474,534h1v1h-1zM1474,551h1v1h-1zM1474,569h1v1h-1zM1474,586h1v1h-1zM1474,603h1v1h-1zM1474,621h1v1h-1zM1474,638h1v1h-1zM1474,655h1v1h-1zM1474,672h1v1h-1zM1474,690h1v1h-1zM1474,707h1v1h-1zM1474,724h1v1h-1zM1474,742h1v1h-1zM1474,759h1v1h-1zM1474,776h1v1h-1zM1474,793h1v1h-1zM1474,811h1v1h-1zM1474,828h1v1h-1zM1474,845h1v1h-1zM1474,863h1v1h-1zM1474,880h1v1h-1zM1474,897h1v1h-1zM1491,33h1v1h-1zM1491,50h1v1h-1zM1491,67h1v1h-1zM1491,85h1v1h-1zM1491,102h1v1h-1zM1491,119h1v1h-1zM1491,136h1v1h-1zM1491,154h1v1h-1zM1491,171h1v1h-1zM1491,188h1v1h-1zM1491,206h1v1h-1zM1491,223h1v1h-1zM1491,240h1v1h-1zM1491,257h1v1h-1zM1491,275h1v1h-1zM1491,292h1v1h-1zM1491,309h1v1h-1zM1491,327h1v1h-1zM1491,344h1v1h-1zM1491,361h1v1h-1zM1491,378h1v1h-1zM1491,396h1v1h-1zM1491,413h1v1h-1zM1491,430h1v1h-1zM1491,448h1v1h-1zM1491,465h1v1h-1zM1491,482h1v1h-1zM1491,499h1v1h-1zM1491,517h1v1h-1zM1491,534h1v1h-1zM1491,551h1v1h-1zM1491,569h1v1h-1zM1491,586h1v1h-1zM1491,603h1v1h-1zM1491,621h1v1h-1zM1491,638h1v1h-1zM1491,655h1v1h-1zM1491,672h1v1h-1zM1491,690h1v1h-1zM1491,707h1v1h-1zM1491,724h1v1h-1zM1491,742h1v1h-1zM1491,759h1v1h-1zM1491,776h1v1h-1zM1491,793h1v1h-1zM1491,811h1v1h-1zM1491,828h1v1h-1zM1491,845h1v1h-1zM1491,863h1v1h-1zM1491,880h1v1h-1zM1491,897h1v1h-1zM1508,33h1v1h-1zM1508,50h1v1h-1zM1508,67h1v1h-1zM1508,85h1v1h-1zM1508,102h1v1h-1zM1508,119h1v1h-1zM1508,136h1v1h-1zM1508,154h1v1h-1zM1508,171h1v1h-1zM1508,188h1v1h-1zM1508,206h1v1h-1zM1508,223h1v1h-1zM1508,240h1v1h-1zM1508,257h1v1h-1zM1508,275h1v1h-1zM1508,292h1v1h-1zM1508,309h1v1h-1zM1508,327h1v1h-1zM1508,344h1v1h-1zM1508,361h1v1h-1zM1508,378h1v1h-1zM1508,396h1v1h-1zM1508,413h1v1h-1zM1508,430h1v1h-1zM1508,448h1v1h-1zM1508,465h1v1h-1zM1508,482h1v1h-1zM1508,499h1v1h-1zM1508,517h1v1h-1zM1508,534h1v1h-1zM1508,551h1v1h-1zM1508,569h1v1h-1zM1508,586h1v1h-1zM1508,603h1v1h-1zM1508,621h1v1h-1zM1508,638h1v1h-1zM1508,655h1v1h-1zM1508,672h1v1h-1zM1508,690h1v1h-1zM1508,707h1v1h-1zM1508,724h1v1h-1zM1508,742h1v1h-1zM1508,759h1v1h-1zM1508,776h1v1h-1zM1508,793h1v1h-1zM1508,811h1v1h-1zM1508,828h1v1h-1zM1508,845h1v1h-1zM1508,863h1v1h-1zM1508,880h1v1h-1zM1508,897h1v1h-1zM1526,33h1v1h-1zM1526,50h1v1h-1zM1526,67h1v1h-1zM1526,85h1v1h-1zM1526,102h1v1h-1zM1526,119h1v1h-1zM1526,136h1v1h-1zM1526,154h1v1h-1zM1526,171h1v1h-1zM1526,188h1v1h-1zM1526,206h1v1h-1zM1526,223h1v1h-1zM1526,240h1v1h-1zM1526,257h1v1h-1zM1526,275h1v1h-1zM1526,292h1v1h-1zM1526,309h1v1h-1zM1526,327h1v1h-1zM1526,344h1v1h-1zM1526,361h1v1h-1zM1526,378h1v1h-1zM1526,396h1v1h-1zM1526,413h1v1h-1zM1526,430h1v1h-1zM1526,448h1v1h-1zM1526,465h1v1h-1zM1526,482h1v1h-1zM1526,499h1v1h-1zM1526,517h1v1h-1zM1526,534h1v1h-1zM1526,551h1v1h-1zM1526,569h1v1h-1zM1526,586h1v1h-1zM1526,603h1v1h-1zM1526,621h1v1h-1zM1526,638h1v1h-1zM1526,655h1v1h-1zM1526,672h1v1h-1zM1526,690h1v1h-1zM1526,707h1v1h-1zM1526,724h1v1h-1zM1526,742h1v1h-1zM1526,759h1v1h-1zM1526,776h1v1h-1zM1526,793h1v1h-1zM1526,811h1v1h-1zM1526,828h1v1h-1zM1526,845h1v1h-1zM1526,863h1v1h-1zM1526,880h1v1h-1zM1526,897h1v1h-1zM1543,33h1v1h-1zM1543,50h1v1h-1zM1543,67h1v1h-1zM1543,85h1v1h-1zM1543,102h1v1h-1zM1543,119h1v1h-1zM1543,136h1v1h-1zM1543,154h1v1h-1zM1543,171h1v1h-1zM1543,188h1v1h-1zM1543,206h1v1h-1zM1543,223h1v1h-1zM1543,240h1v1h-1zM1543,257h1v1h-1zM1543,275h1v1h-1zM1543,292h1v1h-1zM1543,309h1v1h-1zM1543,327h1v1h-1zM1543,344h1v1h-1zM1543,361h1v1h-1zM1543,378h1v1h-1zM1543,396h1v1h-1zM1543,413h1v1h-1zM1543,430h1v1h-1zM1543,448h1v1h-1zM1543,465h1v1h-1zM1543,482h1v1h-1zM1543,499h1v1h-1zM1543,517h1v1h-1zM1543,534h1v1h-1zM1543,551h1v1h-1zM1543,569h1v1h-1zM1543,586h1v1h-1zM1543,603h1v1h-1zM1543,621h1v1h-1zM1543,638h1v1h-1zM1543,655h1v1h-1zM1543,672h1v1h-1zM1543,690h1v1h-1zM1543,707h1v1h-1zM1543,724h1v1h-1zM1543,742h1v1h-1zM1543,759h1v1h-1zM1543,776h1v1h-1zM1543,793h1v1h-1zM1543,811h1v1h-1zM1543,828h1v1h-1zM1543,845h1v1h-1zM1543,863h1v1h-1zM1543,880h1v1h-1zM1543,897h1v1h-1zM1560,33h1v1h-1zM1560,50h1v1h-1zM1560,67h1v1h-1zM1560,85h1v1h-1zM1560,102h1v1h-1zM1560,119h1v1h-1zM1560,136h1v1h-1zM1560,154h1v1h-1zM1560,171h1v1h-1zM1560,188h1v1h-1zM1560,206h1v1h-1zM1560,223h1v1h-1zM1560,240h1v1h-1zM1560,257h1v1h-1zM1560,275h1v1h-1zM1560,292h1v1h-1zM1560,309h1v1h-1zM1560,327h1v1h-1zM1560,344h1v1h-1zM1560,361h1v1h-1zM1560,378h1v1h-1zM1560,396h1v1h-1zM1560,413h1v1h-1zM1560,430h1v1h-1zM1560,448h1v1h-1zM1560,465h1v1h-1zM1560,482h1v1h-1zM1560,499h1v1h-1zM1560,517h1v1h-1zM1560,534h1v1h-1zM1560,551h1v1h-1zM1560,569h1v1h-1zM1560,586h1v1h-1zM1560,603h1v1h-1zM1560,621h1v1h-1zM1560,638h1v1h-1zM1560,655h1v1h-1zM1560,672h1v1h-1zM1560,690h1v1h-1zM1560,707h1v1h-1zM1560,724h1v1h-1zM1560,742h1v1h-1zM1560,759h1v1h-1zM1560,776h1v1h-1zM1560,793h1v1h-1zM1560,811h1v1h-1zM1560,828h1v1h-1zM1560,845h1v1h-1zM1560,863h1v1h-1zM1560,880h1v1h-1zM1560,897h1v1h-1zM1578,33h1v1h-1zM1578,50h1v1h-1zM1578,67h1v1h-1zM1578,85h1v1h-1zM1578,102h1v1h-1zM1578,119h1v1h-1zM1578,136h1v1h-1zM1578,154h1v1h-1zM1578,171h1v1h-1zM1578,188h1v1h-1zM1578,206h1v1h-1zM1578,223h1v1h-1zM1578,240h1v1h-1zM1578,257h1v1h-1zM1578,275h1v1h-1zM1578,292h1v1h-1zM1578,309h1v1h-1zM1578,327h1v1h-1zM1578,344h1v1h-1zM1578,361h1v1h-1zM1578,378h1v1h-1zM1578,396h1v1h-1zM1578,413h1v1h-1zM1578,430h1v1h-1zM1578,448h1v1h-1zM1578,465h1v1h-1zM1578,482h1v1h-1zM1578,499h1v1h-1zM1578,517h1v1h-1zM1578,534h1v1h-1zM1578,551h1v1h-1zM1578,569h1v1h-1zM1578,586h1v1h-1zM1578,603h1v1h-1zM1578,621h1v1h-1zM1578,638h1v1h-1zM1578,655h1v1h-1zM1578,672h1v1h-1zM1578,690h1v1h-1zM1578,707h1v1h-1zM1578,724h1v1h-1zM1578,742h1v1h-1zM1578,759h1v1h-1zM1578,776h1v1h-1zM1578,793h1v1h-1zM1578,811h1v1h-1zM1578,828h1v1h-1zM1578,845h1v1h-1zM1578,863h1v1h-1zM1578,880h1v1h-1zM1578,897h1v1h-1zM1595,33h1v1h-1zM1595,50h1v1h-1zM1595,67h1v1h-1zM1595,85h1v1h-1zM1595,102h1v1h-1zM1595,119h1v1h-1zM1595,136h1v1h-1zM1595,154h1v1h-1zM1595,171h1v1h-1zM1595,188h1v1h-1zM1595,206h1v1h-1zM1595,223h1v1h-1zM1595,240h1v1h-1zM1595,257h1v1h-1zM1595,275h1v1h-1zM1595,292h1v1h-1zM1595,309h1v1h-1zM1595,327h1v1h-1zM1595,344h1v1h-1zM1595,361h1v1h-1zM1595,378h1v1h-1zM1595,396h1v1h-1zM1595,413h1v1h-1zM1595,430h1v1h-1zM1595,448h1v1h-1zM1595,465h1v1h-1zM1595,482h1v1h-1zM1595,499h1v1h-1zM1595,517h1v1h-1zM1595,534h1v1h-1zM1595,551h1v1h-1zM1595,569h1v1h-1zM1595,586h1v1h-1zM1595,603h1v1h-1zM1595,621h1v1h-1zM1595,638h1v1h-1zM1595,655h1v1h-1zM1595,672h1v1h-1zM1595,690h1v1h-1zM1595,707h1v1h-1zM1595,724h1v1h-1zM1595,742h1v1h-1zM1595,759h1v1h-1zM1595,776h1v1h-1zM1595,793h1v1h-1zM1595,811h1v1h-1zM1595,828h1v1h-1zM1595,845h1v1h-1zM1595,863h1v1h-1zM1595,880h1v1h-1zM1595,897h1v1h-1zM1612,33h1v1h-1zM1612,50h1v1h-1zM1612,67h1v1h-1zM1612,85h1v1h-1zM1612,102h1v1h-1zM1612,119h1v1h-1zM1612,136h1v1h-1zM1612,154h1v1h-1zM1612,171h1v1h-1zM1612,188h1v1h-1zM1612,206h1v1h-1zM1612,223h1v1h-1zM1612,240h1v1h-1zM1612,257h1v1h-1zM1612,275h1v1h-1zM1612,292h1v1h-1zM1612,309h1v1h-1zM1612,327h1v1h-1zM1612,344h1v1h-1zM1612,361h1v1h-1zM1612,378h1v1h-1zM1612,396h1v1h-1zM1612,413h1v1h-1zM1612,430h1v1h-1zM1612,448h1v1h-1zM1612,465h1v1h-1zM1612,482h1v1h-1zM1612,499h1v1h-1zM1612,517h1v1h-1zM1612,534h1v1h-1zM1612,551h1v1h-1zM1612,569h1v1h-1zM1612,586h1v1h-1zM1612,603h1v1h-1zM1612,621h1v1h-1zM1612,638h1v1h-1zM1612,655h1v1h-1zM1612,672h1v1h-1zM1612,690h1v1h-1zM1612,707h1v1h-1zM1612,724h1v1h-1zM1612,742h1v1h-1zM1612,759h1v1h-1zM1612,776h1v1h-1zM1612,793h1v1h-1zM1612,811h1v1h-1zM1612,828h1v1h-1zM1612,845h1v1h-1zM1612,863h1v1h-1zM1612,880h1v1h-1zM1612,897h1v1h-1zM1629,33h1v1h-1zM1629,50h1v1h-1zM1629,67h1v1h-1zM1629,85h1v1h-1zM1629,102h1v1h-1zM1629,119h1v1h-1zM1629,136h1v1h-1zM1629,154h1v1h-1zM1629,171h1v1h-1zM1629,188h1v1h-1zM1629,206h1v1h-1zM1629,223h1v1h-1zM1629,240h1v1h-1zM1629,257h1v1h-1zM1629,275h1v1h-1zM1629,292h1v1h-1zM1629,309h1v1h-1zM1629,327h1v1h-1zM1629,344h1v1h-1zM1629,361h1v1h-1zM1629,378h1v1h-1zM1629,396h1v1h-1zM1629,413h1v1h-1zM1629,430h1v1h-1zM1629,448h1v1h-1zM1629,465h1v1h-1zM1629,482h1v1h-1zM1629,499h1v1h-1zM1629,517h1v1h-1zM1629,534h1v1h-1zM1629,551h1v1h-1zM1629,569h1v1h-1zM1629,586h1v1h-1zM1629,603h1v1h-1zM1629,621h1v1h-1zM1629,638h1v1h-1zM1629,655h1v1h-1zM1629,672h1v1h-1zM1629,690h1v1h-1zM1629,707h1v1h-1zM1629,724h1v1h-1zM1629,742h1v1h-1zM1629,759h1v1h-1zM1629,776h1v1h-1zM1629,793h1v1h-1zM1629,811h1v1h-1zM1629,828h1v1h-1zM1629,845h1v1h-1zM1629,863h1v1h-1zM1629,880h1v1h-1zM1629,897h1v1h-1zM1647,33h1v1h-1zM1647,50h1v1h-1zM1647,67h1v1h-1zM1647,85h1v1h-1zM1647,102h1v1h-1zM1647,119h1v1h-1zM1647,136h1v1h-1zM1647,154h1v1h-1zM1647,171h1v1h-1zM1647,188h1v1h-1zM1647,206h1v1h-1zM1647,223h1v1h-1zM1647,240h1v1h-1zM1647,257h1v1h-1zM1647,275h1v1h-1zM1647,292h1v1h-1zM1647,309h1v1h-1zM1647,327h1v1h-1zM1647,344h1v1h-1zM1647,361h1v1h-1zM1647,378h1v1h-1zM1647,396h1v1h-1zM1647,413h1v1h-1zM1647,430h1v1h-1zM1647,448h1v1h-1zM1647,465h1v1h-1zM1647,482h1v1h-1zM1647,499h1v1h-1zM1647,517h1v1h-1zM1647,534h1v1h-1zM1647,551h1v1h-1zM1647,569h1v1h-1zM1647,586h1v1h-1zM1647,603h1v1h-1zM1647,621h1v1h-1zM1647,638h1v1h-1zM1647,655h1v1h-1zM1647,672h1v1h-1zM1647,690h1v1h-1zM1647,707h1v1h-1zM1647,724h1v1h-1zM1647,742h1v1h-1zM1647,759h1v1h-1zM1647,776h1v1h-1zM1647,793h1v1h-1zM1647,811h1v1h-1zM1647,828h1v1h-1zM1647,845h1v1h-1zM1647,863h1v1h-1zM1647,880h1v1h-1zM1647,897h1v1h-1zM1664,33h1v1h-1zM1664,50h1v1h-1zM1664,67h1v1h-1zM1664,85h1v1h-1zM1664,102h1v1h-1zM1664,119h1v1h-1zM1664,136h1v1h-1zM1664,154h1v1h-1zM1664,171h1v1h-1zM1664,188h1v1h-1zM1664,206h1v1h-1zM1664,223h1v1h-1zM1664,240h1v1h-1zM1664,257h1v1h-1zM1664,275h1v1h-1zM1664,292h1v1h-1zM1664,309h1v1h-1zM1664,327h1v1h-1zM1664,344h1v1h-1zM1664,361h1v1h-1zM1664,378h1v1h-1zM1664,396h1v1h-1zM1664,413h1v1h-1zM1664,430h1v1h-1zM1664,448h1v1h-1zM1664,465h1v1h-1zM1664,482h1v1h-1zM1664,499h1v1h-1zM1664,517h1v1h-1zM1664,534h1v1h-1zM1664,551h1v1h-1zM1664,569h1v1h-1zM1664,586h1v1h-1zM1664,603h1v1h-1zM1664,621h1v1h-1zM1664,638h1v1h-1zM1664,655h1v1h-1zM1664,672h1v1h-1zM1664,690h1v1h-1zM1664,707h1v1h-1zM1664,724h1v1h-1zM1664,742h1v1h-1zM1664,759h1v1h-1zM1664,776h1v1h-1zM1664,793h1v1h-1zM1664,811h1v1h-1zM1664,828h1v1h-1zM1664,845h1v1h-1zM1664,863h1v1h-1zM1664,880h1v1h-1zM1664,897h1v1h-1zM1681,33h1v1h-1zM1681,50h1v1h-1zM1681,67h1v1h-1zM1681,85h1v1h-1zM1681,102h1v1h-1zM1681,119h1v1h-1zM1681,136h1v1h-1zM1681,154h1v1h-1zM1681,171h1v1h-1zM1681,188h1v1h-1zM1681,206h1v1h-1zM1681,223h1v1h-1zM1681,240h1v1h-1zM1681,257h1v1h-1zM1681,275h1v1h-1zM1681,292h1v1h-1zM1681,309h1v1h-1zM1681,327h1v1h-1zM1681,344h1v1h-1zM1681,361h1v1h-1zM1681,378h1v1h-1zM1681,396h1v1h-1zM1681,413h1v1h-1zM1681,430h1v1h-1zM1681,448h1v1h-1zM1681,465h1v1h-1zM1681,482h1v1h-1zM1681,499h1v1h-1zM1681,517h1v1h-1zM1681,534h1v1h-1zM1681,551h1v1h-1zM1681,569h1v1h-1zM1681,586h1v1h-1zM1681,603h1v1h-1zM1681,621h1v1h-1zM1681,638h1v1h-1zM1681,655h1v1h-1zM1681,672h1v1h-1zM1681,690h1v1h-1zM1681,707h1v1h-1zM1681,724h1v1h-1zM1681,742h1v1h-1zM1681,759h1v1h-1zM1681,776h1v1h-1zM1681,793h1v1h-1zM1681,811h1v1h-1zM1681,828h1v1h-1zM1681,845h1v1h-1zM1681,863h1v1h-1zM1681,880h1v1h-1zM1681,897h1v1h-1zM1699,33h1v1h-1zM1699,50h1v1h-1zM1699,67h1v1h-1zM1699,85h1v1h-1zM1699,102h1v1h-1zM1699,119h1v1h-1zM1699,136h1v1h-1zM1699,154h1v1h-1zM1699,171h1v1h-1zM1699,188h1v1h-1zM1699,206h1v1h-1zM1699,223h1v1h-1zM1699,240h1v1h-1zM1699,257h1v1h-1zM1699,275h1v1h-1zM1699,292h1v1h-1zM1699,309h1v1h-1zM1699,327h1v1h-1zM1699,344h1v1h-1zM1699,361h1v1h-1zM1699,378h1v1h-1zM1699,396h1v1h-1zM1699,413h1v1h-1zM1699,430h1v1h-1zM1699,448h1v1h-1zM1699,465h1v1h-1zM1699,482h1v1h-1zM1699,499h1v1h-1zM1699,517h1v1h-1zM1699,534h1v1h-1zM1699,551h1v1h-1zM1699,569h1v1h-1zM1699,586h1v1h-1zM1699,603h1v1h-1zM1699,621h1v1h-1zM1699,638h1v1h-1zM1699,655h1v1h-1zM1699,672h1v1h-1zM1699,690h1v1h-1zM1699,707h1v1h-1zM1699,724h1v1h-1zM1699,742h1v1h-1zM1699,759h1v1h-1zM1699,776h1v1h-1zM1699,793h1v1h-1zM1699,811h1v1h-1zM1699,828h1v1h-1zM1699,845h1v1h-1zM1699,863h1v1h-1zM1699,880h1v1h-1zM1699,897h1v1h-1zM1716,33h1v1h-1zM1716,50h1v1h-1zM1716,67h1v1h-1zM1716,85h1v1h-1zM1716,102h1v1h-1zM1716,119h1v1h-1zM1716,136h1v1h-1zM1716,154h1v1h-1zM1716,171h1v1h-1zM1716,188h1v1h-1zM1716,206h1v1h-1zM1716,223h1v1h-1zM1716,240h1v1h-1zM1716,257h1v1h-1zM1716,275h1v1h-1zM1716,292h1v1h-1zM1716,309h1v1h-1zM1716,327h1v1h-1zM1716,344h1v1h-1zM1716,361h1v1h-1zM1716,378h1v1h-1zM1716,396h1v1h-1zM1716,413h1v1h-1zM1716,430h1v1h-1zM1716,448h1v1h-1zM1716,465h1v1h-1zM1716,482h1v1h-1zM1716,499h1v1h-1zM1716,517h1v1h-1zM1716,534h1v1h-1zM1716,551h1v1h-1zM1716,569h1v1h-1zM1716,586h1v1h-1zM1716,603h1v1h-1zM1716,621h1v1h-1zM1716,638h1v1h-1zM1716,655h1v1h-1zM1716,672h1v1h-1zM1716,690h1v1h-1zM1716,707h1v1h-1zM1716,724h1v1h-1zM1716,742h1v1h-1zM1716,759h1v1h-1zM1716,776h1v1h-1zM1716,793h1v1h-1zM1716,811h1v1h-1zM1716,828h1v1h-1zM1716,845h1v1h-1zM1716,863h1v1h-1zM1716,880h1v1h-1zM1716,897h1v1h-1zM1733,33h1v1h-1zM1733,50h1v1h-1zM1733,67h1v1h-1zM1733,85h1v1h-1zM1733,102h1v1h-1zM1733,119h1v1h-1zM1733,136h1v1h-1zM1733,154h1v1h-1zM1733,171h1v1h-1zM1733,188h1v1h-1zM1733,206h1v1h-1zM1733,223h1v1h-1zM1733,240h1v1h-1zM1733,257h1v1h-1zM1733,275h1v1h-1zM1733,292h1v1h-1zM1733,309h1v1h-1zM1733,327h1v1h-1zM1733,344h1v1h-1zM1733,361h1v1h-1zM1733,378h1v1h-1zM1733,396h1v1h-1zM1733,413h1v1h-1zM1733,430h1v1h-1zM1733,448h1v1h-1zM1733,465h1v1h-1zM1733,482h1v1h-1zM1733,499h1v1h-1zM1733,517h1v1h-1zM1733,534h1v1h-1zM1733,551h1v1h-1zM1733,569h1v1h-1zM1733,586h1v1h-1zM1733,603h1v1h-1zM1733,621h1v1h-1zM1733,638h1v1h-1zM1733,655h1v1h-1zM1733,672h1v1h-1zM1733,690h1v1h-1zM1733,707h1v1h-1zM1733,724h1v1h-1zM1733,742h1v1h-1zM1733,759h1v1h-1zM1733,776h1v1h-1zM1733,793h1v1h-1zM1733,811h1v1h-1zM1733,828h1v1h-1zM1733,845h1v1h-1zM1733,863h1v1h-1zM1733,880h1v1h-1zM1733,897h1v1h-1zM1750,33h1v1h-1zM1750,50h1v1h-1zM1750,67h1v1h-1zM1750,85h1v1h-1zM1750,102h1v1h-1zM1750,119h1v1h-1zM1750,136h1v1h-1zM1750,154h1v1h-1zM1750,171h1v1h-1zM1750,188h1v1h-1zM1750,206h1v1h-1zM1750,223h1v1h-1zM1750,240h1v1h-1zM1750,257h1v1h-1zM1750,275h1v1h-1zM1750,292h1v1h-1zM1750,309h1v1h-1zM1750,327h1v1h-1zM1750,344h1v1h-1zM1750,361h1v1h-1zM1750,378h1v1h-1zM1750,396h1v1h-1zM1750,413h1v1h-1zM1750,430h1v1h-1zM1750,448h1v1h-1zM1750,465h1v1h-1zM1750,482h1v1h-1zM1750,499h1v1h-1zM1750,517h1v1h-1zM1750,534h1v1h-1zM1750,551h1v1h-1zM1750,569h1v1h-1zM1750,586h1v1h-1zM1750,603h1v1h-1zM1750,621h1v1h-1zM1750,638h1v1h-1zM1750,655h1v1h-1zM1750,672h1v1h-1zM1750,690h1v1h-1zM1750,707h1v1h-1zM1750,724h1v1h-1zM1750,742h1v1h-1zM1750,759h1v1h-1zM1750,776h1v1h-1zM1750,793h1v1h-1zM1750,811h1v1h-1zM1750,828h1v1h-1zM1750,845h1v1h-1zM1750,863h1v1h-1zM1750,880h1v1h-1zM1750,897h1v1h-1zM1768,33h1v1h-1zM1768,50h1v1h-1zM1768,67h1v1h-1zM1768,85h1v1h-1zM1768,102h1v1h-1zM1768,119h1v1h-1zM1768,136h1v1h-1zM1768,154h1v1h-1zM1768,171h1v1h-1zM1768,188h1v1h-1zM1768,206h1v1h-1zM1768,223h1v1h-1zM1768,240h1v1h-1zM1768,257h1v1h-1zM1768,275h1v1h-1zM1768,292h1v1h-1zM1768,309h1v1h-1zM1768,327h1v1h-1zM1768,344h1v1h-1zM1768,361h1v1h-1zM1768,378h1v1h-1zM1768,396h1v1h-1zM1768,413h1v1h-1zM1768,430h1v1h-1zM1768,448h1v1h-1zM1768,465h1v1h-1zM1768,482h1v1h-1zM1768,499h1v1h-1zM1768,517h1v1h-1zM1768,534h1v1h-1zM1768,551h1v1h-1zM1768,569h1v1h-1zM1768,586h1v1h-1zM1768,603h1v1h-1zM1768,621h1v1h-1zM1768,638h1v1h-1zM1768,655h1v1h-1zM1768,672h1v1h-1zM1768,690h1v1h-1zM1768,707h1v1h-1zM1768,724h1v1h-1zM1768,742h1v1h-1zM1768,759h1v1h-1zM1768,776h1v1h-1zM1768,793h1v1h-1zM1768,811h1v1h-1zM1768,828h1v1h-1zM1768,845h1v1h-1zM1768,863h1v1h-1zM1768,880h1v1h-1zM1768,897h1v1h-1zM1785,33h1v1h-1zM1785,50h1v1h-1zM1785,67h1v1h-1zM1785,85h1v1h-1zM1785,102h1v1h-1zM1785,119h1v1h-1zM1785,136h1v1h-1zM1785,154h1v1h-1zM1785,171h1v1h-1zM1785,188h1v1h-1zM1785,206h1v1h-1zM1785,223h1v1h-1zM1785,240h1v1h-1zM1785,257h1v1h-1zM1785,275h1v1h-1zM1785,292h1v1h-1zM1785,309h1v1h-1zM1785,327h1v1h-1zM1785,344h1v1h-1zM1785,361h1v1h-1zM1785,378h1v1h-1zM1785,396h1v1h-1zM1785,413h1v1h-1zM1785,430h1v1h-1zM1785,448h1v1h-1zM1785,465h1v1h-1zM1785,482h1v1h-1zM1785,499h1v1h-1zM1785,517h1v1h-1zM1785,534h1v1h-1zM1785,551h1v1h-1zM1785,569h1v1h-1zM1785,586h1v1h-1zM1785,603h1v1h-1zM1785,621h1v1h-1zM1785,638h1v1h-1zM1785,655h1v1h-1zM1785,672h1v1h-1zM1785,690h1v1h-1zM1785,707h1v1h-1zM1785,724h1v1h-1zM1785,742h1v1h-1zM1785,759h1v1h-1zM1785,776h1v1h-1zM1785,793h1v1h-1zM1785,811h1v1h-1zM1785,828h1v1h-1zM1785,845h1v1h-1zM1785,863h1v1h-1zM1785,880h1v1h-1zM1785,897h1v1h-1zM1802,33h1v1h-1zM1802,50h1v1h-1zM1802,67h1v1h-1zM1802,85h1v1h-1zM1802,102h1v1h-1zM1802,119h1v1h-1zM1802,136h1v1h-1zM1802,154h1v1h-1zM1802,171h1v1h-1zM1802,188h1v1h-1zM1802,206h1v1h-1zM1802,223h1v1h-1zM1802,240h1v1h-1zM1802,257h1v1h-1zM1802,275h1v1h-1zM1802,292h1v1h-1zM1802,309h1v1h-1zM1802,327h1v1h-1zM1802,344h1v1h-1zM1802,361h1v1h-1zM1802,378h1v1h-1zM1802,396h1v1h-1zM1802,413h1v1h-1zM1802,430h1v1h-1zM1802,448h1v1h-1zM1802,465h1v1h-1zM1802,482h1v1h-1zM1802,499h1v1h-1zM1802,517h1v1h-1zM1802,534h1v1h-1zM1802,551h1v1h-1zM1802,569h1v1h-1zM1802,586h1v1h-1zM1802,603h1v1h-1zM1802,621h1v1h-1zM1802,638h1v1h-1zM1802,655h1v1h-1zM1802,672h1v1h-1zM1802,690h1v1h-1zM1802,707h1v1h-1zM1802,724h1v1h-1zM1802,742h1v1h-1zM1802,759h1v1h-1zM1802,776h1v1h-1zM1802,793h1v1h-1zM1802,811h1v1h-1zM1802,828h1v1h-1zM1802,845h1v1h-1zM1802,863h1v1h-1zM1802,880h1v1h-1zM1802,897h1v1h-1zM1820,33h1v1h-1zM1820,50h1v1h-1zM1820,67h1v1h-1zM1820,85h1v1h-1zM1820,102h1v1h-1zM1820,119h1v1h-1zM1820,136h1v1h-1zM1820,154h1v1h-1zM1820,171h1v1h-1zM1820,188h1v1h-1zM1820,206h1v1h-1zM1820,223h1v1h-1zM1820,240h1v1h-1zM1820,257h1v1h-1zM1820,275h1v1h-1zM1820,292h1v1h-1zM1820,309h1v1h-1zM1820,327h1v1h-1zM1820,344h1v1h-1zM1820,361h1v1h-1zM1820,378h1v1h-1zM1820,396h1v1h-1zM1820,413h1v1h-1zM1820,430h1v1h-1zM1820,448h1v1h-1zM1820,465h1v1h-1zM1820,482h1v1h-1zM1820,499h1v1h-1zM1820,517h1v1h-1zM1820,534h1v1h-1zM1820,551h1v1h-1zM1820,569h1v1h-1zM1820,586h1v1h-1zM1820,603h1v1h-1zM1820,621h1v1h-1zM1820,638h1v1h-1zM1820,655h1v1h-1zM1820,672h1v1h-1zM1820,690h1v1h-1zM1820,707h1v1h-1zM1820,724h1v1h-1zM1820,742h1v1h-1zM1820,759h1v1h-1zM1820,776h1v1h-1zM1820,793h1v1h-1zM1820,811h1v1h-1zM1820,828h1v1h-1zM1820,845h1v1h-1zM1820,863h1v1h-1zM1820,880h1v1h-1zM1820,897h1v1h-1zM1837,33h1v1h-1zM1837,50h1v1h-1zM1837,67h1v1h-1zM1837,85h1v1h-1zM1837,102h1v1h-1zM1837,119h1v1h-1zM1837,136h1v1h-1zM1837,154h1v1h-1zM1837,171h1v1h-1zM1837,188h1v1h-1zM1837,206h1v1h-1zM1837,223h1v1h-1zM1837,240h1v1h-1zM1837,257h1v1h-1zM1837,275h1v1h-1zM1837,292h1v1h-1zM1837,309h1v1h-1zM1837,327h1v1h-1zM1837,344h1v1h-1zM1837,361h1v1h-1zM1837,378h1v1h-1zM1837,396h1v1h-1zM1837,413h1v1h-1zM1837,430h1v1h-1zM1837,448h1v1h-1zM1837,465h1v1h-1zM1837,482h1v1h-1zM1837,499h1v1h-1zM1837,517h1v1h-1zM1837,534h1v1h-1zM1837,551h1v1h-1zM1837,569h1v1h-1zM1837,586h1v1h-1zM1837,603h1v1h-1zM1837,621h1v1h-1zM1837,638h1v1h-1zM1837,655h1v1h-1zM1837,672h1v1h-1zM1837,690h1v1h-1zM1837,707h1v1h-1zM1837,724h1v1h-1zM1837,742h1v1h-1zM1837,759h1v1h-1zM1837,776h1v1h-1zM1837,793h1v1h-1zM1837,811h1v1h-1zM1837,828h1v1h-1zM1837,845h1v1h-1zM1837,863h1v1h-1zM1837,880h1v1h-1zM1837,897h1v1h-1zM1854,33h1v1h-1zM1854,50h1v1h-1zM1854,67h1v1h-1zM1854,85h1v1h-1zM1854,102h1v1h-1zM1854,119h1v1h-1zM1854,136h1v1h-1zM1854,154h1v1h-1zM1854,171h1v1h-1zM1854,188h1v1h-1zM1854,206h1v1h-1zM1854,223h1v1h-1zM1854,240h1v1h-1zM1854,257h1v1h-1zM1854,275h1v1h-1zM1854,292h1v1h-1zM1854,309h1v1h-1zM1854,327h1v1h-1zM1854,344h1v1h-1zM1854,361h1v1h-1zM1854,378h1v1h-1zM1854,396h1v1h-1zM1854,413h1v1h-1zM1854,430h1v1h-1zM1854,448h1v1h-1zM1854,465h1v1h-1zM1854,482h1v1h-1zM1854,499h1v1h-1zM1854,517h1v1h-1zM1854,534h1v1h-1zM1854,551h1v1h-1zM1854,569h1v1h-1zM1854,586h1v1h-1zM1854,603h1v1h-1zM1854,621h1v1h-1zM1854,638h1v1h-1zM1854,655h1v1h-1zM1854,672h1v1h-1zM1854,690h1v1h-1zM1854,707h1v1h-1zM1854,724h1v1h-1zM1854,742h1v1h-1zM1854,759h1v1h-1zM1854,776h1v1h-1zM1854,793h1v1h-1zM1854,811h1v1h-1zM1854,828h1v1h-1zM1854,845h1v1h-1zM1854,863h1v1h-1zM1854,880h1v1h-1zM1854,897h1v1h-1zM1871,33h1v1h-1zM1871,50h1v1h-1zM1871,67h1v1h-1zM1871,85h1v1h-1zM1871,102h1v1h-1zM1871,119h1v1h-1zM1871,136h1v1h-1zM1871,154h1v1h-1zM1871,171h1v1h-1zM1871,188h1v1h-1zM1871,206h1v1h-1zM1871,223h1v1h-1zM1871,240h1v1h-1zM1871,257h1v1h-1zM1871,275h1v1h-1zM1871,292h1v1h-1zM1871,309h1v1h-1zM1871,327h1v1h-1zM1871,344h1v1h-1zM1871,361h1v1h-1zM1871,378h1v1h-1zM1871,396h1v1h-1zM1871,413h1v1h-1zM1871,430h1v1h-1zM1871,448h1v1h-1zM1871,465h1v1h-1zM1871,482h1v1h-1zM1871,499h1v1h-1zM1871,517h1v1h-1zM1871,534h1v1h-1zM1871,551h1v1h-1zM1871,569h1v1h-1zM1871,586h1v1h-1zM1871,603h1v1h-1zM1871,621h1v1h-1zM1871,638h1v1h-1zM1871,655h1v1h-1zM1871,672h1v1h-1zM1871,690h1v1h-1zM1871,707h1v1h-1zM1871,724h1v1h-1zM1871,742h1v1h-1zM1871,759h1v1h-1zM1871,776h1v1h-1zM1871,793h1v1h-1zM1871,811h1v1h-1zM1871,828h1v1h-1zM1871,845h1v1h-1zM1871,863h1v1h-1zM1871,880h1v1h-1zM1871,897h1v1h-1zM1889,33h1v1h-1zM1889,50h1v1h-1zM1889,67h1v1h-1zM1889,85h1v1h-1zM1889,102h1v1h-1zM1889,119h1v1h-1zM1889,136h1v1h-1zM1889,154h1v1h-1zM1889,171h1v1h-1zM1889,188h1v1h-1zM1889,206h1v1h-1zM1889,223h1v1h-1zM1889,240h1v1h-1zM1889,257h1v1h-1zM1889,275h1v1h-1zM1889,292h1v1h-1zM1889,309h1v1h-1zM1889,327h1v1h-1zM1889,344h1v1h-1zM1889,361h1v1h-1zM1889,378h1v1h-1zM1889,396h1v1h-1zM1889,413h1v1h-1zM1889,430h1v1h-1zM1889,448h1v1h-1zM1889,465h1v1h-1zM1889,482h1v1h-1zM1889,499h1v1h-1zM1889,517h1v1h-1zM1889,534h1v1h-1zM1889,551h1v1h-1zM1889,569h1v1h-1zM1889,586h1v1h-1zM1889,603h1v1h-1zM1889,621h1v1h-1zM1889,638h1v1h-1zM1889,655h1v1h-1zM1889,672h1v1h-1zM1889,690h1v1h-1zM1889,707h1v1h-1zM1889,724h1v1h-1zM1889,742h1v1h-1zM1889,759h1v1h-1zM1889,776h1v1h-1zM1889,793h1v1h-1zM1889,811h1v1h-1zM1889,828h1v1h-1zM1889,845h1v1h-1zM1889,863h1v1h-1zM1889,880h1v1h-1zM1889,897h1v1h-1zM1906,33h1v1h-1zM1906,50h1v1h-1zM1906,67h1v1h-1zM1906,85h1v1h-1zM1906,102h1v1h-1zM1906,119h1v1h-1zM1906,136h1v1h-1zM1906,154h1v1h-1zM1906,171h1v1h-1zM1906,188h1v1h-1zM1906,206h1v1h-1zM1906,223h1v1h-1zM1906,240h1v1h-1zM1906,257h1v1h-1zM1906,275h1v1h-1zM1906,292h1v1h-1zM1906,309h1v1h-1zM1906,327h1v1h-1zM1906,344h1v1h-1zM1906,361h1v1h-1zM1906,378h1v1h-1zM1906,396h1v1h-1zM1906,413h1v1h-1zM1906,430h1v1h-1zM1906,448h1v1h-1zM1906,465h1v1h-1zM1906,482h1v1h-1zM1906,499h1v1h-1zM1906,517h1v1h-1zM1906,534h1v1h-1zM1906,551h1v1h-1zM1906,569h1v1h-1zM1906,586h1v1h-1zM1906,603h1v1h-1zM1906,621h1v1h-1zM1906,638h1v1h-1zM1906,655h1v1h-1zM1906,672h1v1h-1zM1906,690h1v1h-1zM1906,707h1v1h-1zM1906,724h1v1h-1zM1906,742h1v1h-1zM1906,759h1v1h-1zM1906,776h1v1h-1zM1906,793h1v1h-1zM1906,811h1v1h-1zM1906,828h1v1h-1zM1906,845h1v1h-1zM1906,863h1v1h-1zM1906,880h1v1h-1zM1906,897h1v1h-1zM1923,33h1v1h-1zM1923,50h1v1h-1zM1923,67h1v1h-1zM1923,85h1v1h-1zM1923,102h1v1h-1zM1923,119h1v1h-1zM1923,136h1v1h-1zM1923,154h1v1h-1zM1923,171h1v1h-1zM1923,188h1v1h-1zM1923,206h1v1h-1zM1923,223h1v1h-1zM1923,240h1v1h-1zM1923,257h1v1h-1zM1923,275h1v1h-1zM1923,292h1v1h-1zM1923,309h1v1h-1zM1923,327h1v1h-1zM1923,344h1v1h-1zM1923,361h1v1h-1zM1923,378h1v1h-1zM1923,396h1v1h-1zM1923,413h1v1h-1zM1923,430h1v1h-1zM1923,448h1v1h-1zM1923,465h1v1h-1zM1923,482h1v1h-1zM1923,499h1v1h-1zM1923,517h1v1h-1zM1923,534h1v1h-1zM1923,551h1v1h-1zM1923,569h1v1h-1zM1923,586h1v1h-1zM1923,603h1v1h-1zM1923,621h1v1h-1zM1923,638h1v1h-1zM1923,655h1v1h-1zM1923,672h1v1h-1zM1923,690h1v1h-1zM1923,707h1v1h-1zM1923,724h1v1h-1zM1923,742h1v1h-1zM1923,759h1v1h-1zM1923,776h1v1h-1zM1923,793h1v1h-1zM1923,811h1v1h-1zM1923,828h1v1h-1zM1923,845h1v1h-1zM1923,863h1v1h-1zM1923,880h1v1h-1zM1923,897h1v1h-1zM1941,33h1v1h-1zM1941,50h1v1h-1zM1941,67h1v1h-1zM1941,85h1v1h-1zM1941,102h1v1h-1zM1941,119h1v1h-1zM1941,136h1v1h-1zM1941,154h1v1h-1zM1941,171h1v1h-1zM1941,188h1v1h-1zM1941,206h1v1h-1zM1941,223h1v1h-1zM1941,240h1v1h-1zM1941,257h1v1h-1zM1941,275h1v1h-1zM1941,292h1v1h-1zM1941,309h1v1h-1zM1941,327h1v1h-1zM1941,344h1v1h-1zM1941,361h1v1h-1zM1941,378h1v1h-1zM1941,396h1v1h-1zM1941,413h1v1h-1zM1941,430h1v1h-1zM1941,448h1v1h-1zM1941,465h1v1h-1zM1941,482h1v1h-1zM1941,499h1v1h-1zM1941,517h1v1h-1zM1941,534h1v1h-1zM1941,551h1v1h-1zM1941,569h1v1h-1zM1941,586h1v1h-1zM1941,603h1v1h-1zM1941,621h1v1h-1zM1941,638h1v1h-1zM1941,655h1v1h-1zM1941,672h1v1h-1zM1941,690h1v1h-1zM1941,707h1v1h-1zM1941,724h1v1h-1zM1941,742h1v1h-1zM1941,759h1v1h-1zM1941,776h1v1h-1zM1941,793h1v1h-1zM1941,811h1v1h-1zM1941,828h1v1h-1zM1941,845h1v1h-1zM1941,863h1v1h-1zM1941,880h1v1h-1zM1941,897h1v1h-1zM1958,33h1v1h-1zM1958,50h1v1h-1zM1958,67h1v1h-1zM1958,85h1v1h-1zM1958,102h1v1h-1zM1958,119h1v1h-1zM1958,136h1v1h-1zM1958,154h1v1h-1zM1958,171h1v1h-1zM1958,188h1v1h-1zM1958,206h1v1h-1zM1958,223h1v1h-1zM1958,240h1v1h-1zM1958,257h1v1h-1zM1958,275h1v1h-1zM1958,292h1v1h-1zM1958,309h1v1h-1zM1958,327h1v1h-1zM1958,344h1v1h-1zM1958,361h1v1h-1zM1958,378h1v1h-1zM1958,396h1v1h-1zM1958,413h1v1h-1zM1958,430h1v1h-1zM1958,448h1v1h-1zM1958,465h1v1h-1zM1958,482h1v1h-1zM1958,499h1v1h-1zM1958,517h1v1h-1zM1958,534h1v1h-1zM1958,551h1v1h-1zM1958,569h1v1h-1zM1958,586h1v1h-1zM1958,603h1v1h-1zM1958,621h1v1h-1zM1958,638h1v1h-1zM1958,655h1v1h-1zM1958,672h1v1h-1zM1958,690h1v1h-1zM1958,707h1v1h-1zM1958,724h1v1h-1zM1958,742h1v1h-1zM1958,759h1v1h-1zM1958,776h1v1h-1zM1958,793h1v1h-1zM1958,811h1v1h-1zM1958,828h1v1h-1zM1958,845h1v1h-1zM1958,863h1v1h-1zM1958,880h1v1h-1zM1958,897h1v1h-1zM1975,33h1v1h-1zM1975,50h1v1h-1zM1975,67h1v1h-1zM1975,85h1v1h-1zM1975,102h1v1h-1zM1975,119h1v1h-1zM1975,136h1v1h-1zM1975,154h1v1h-1zM1975,171h1v1h-1zM1975,188h1v1h-1zM1975,206h1v1h-1zM1975,223h1v1h-1zM1975,240h1v1h-1zM1975,257h1v1h-1zM1975,275h1v1h-1zM1975,292h1v1h-1zM1975,309h1v1h-1zM1975,327h1v1h-1zM1975,344h1v1h-1zM1975,361h1v1h-1zM1975,378h1v1h-1zM1975,396h1v1h-1zM1975,413h1v1h-1zM1975,430h1v1h-1zM1975,448h1v1h-1zM1975,465h1v1h-1zM1975,482h1v1h-1zM1975,499h1v1h-1zM1975,517h1v1h-1zM1975,534h1v1h-1zM1975,551h1v1h-1zM1975,569h1v1h-1zM1975,586h1v1h-1zM1975,603h1v1h-1zM1975,621h1v1h-1zM1975,638h1v1h-1zM1975,655h1v1h-1zM1975,672h1v1h-1zM1975,690h1v1h-1zM1975,707h1v1h-1zM1975,724h1v1h-1zM1975,742h1v1h-1zM1975,759h1v1h-1zM1975,776h1v1h-1zM1975,793h1v1h-1zM1975,811h1v1h-1zM1975,828h1v1h-1zM1975,845h1v1h-1zM1975,863h1v1h-1zM1975,880h1v1h-1zM1975,897h1v1h-1zM1993,33h1v1h-1zM1993,50h1v1h-1zM1993,67h1v1h-1zM1993,85h1v1h-1zM1993,102h1v1h-1zM1993,119h1v1h-1zM1993,136h1v1h-1zM1993,154h1v1h-1zM1993,171h1v1h-1zM1993,188h1v1h-1zM1993,206h1v1h-1zM1993,223h1v1h-1zM1993,240h1v1h-1zM1993,257h1v1h-1zM1993,275h1v1h-1zM1993,292h1v1h-1zM1993,309h1v1h-1zM1993,327h1v1h-1zM1993,344h1v1h-1zM1993,361h1v1h-1zM1993,378h1v1h-1zM1993,396h1v1h-1zM1993,413h1v1h-1zM1993,430h1v1h-1zM1993,448h1v1h-1zM1993,465h1v1h-1zM1993,482h1v1h-1zM1993,499h1v1h-1zM1993,517h1v1h-1zM1993,534h1v1h-1zM1993,551h1v1h-1zM1993,569h1v1h-1zM1993,586h1v1h-1zM1993,603h1v1h-1zM1993,621h1v1h-1zM1993,638h1v1h-1zM1993,655h1v1h-1zM1993,672h1v1h-1zM1993,690h1v1h-1zM1993,707h1v1h-1zM1993,724h1v1h-1zM1993,742h1v1h-1zM1993,759h1v1h-1zM1993,776h1v1h-1zM1993,793h1v1h-1zM1993,811h1v1h-1zM1993,828h1v1h-1zM1993,845h1v1h-1zM1993,863h1v1h-1zM1993,880h1v1h-1zM1993,897h1v1h-1zM2010,33h1v1h-1zM2010,50h1v1h-1zM2010,67h1v1h-1zM2010,85h1v1h-1zM2010,102h1v1h-1zM2010,119h1v1h-1zM2010,136h1v1h-1zM2010,154h1v1h-1zM2010,171h1v1h-1zM2010,188h1v1h-1zM2010,206h1v1h-1zM2010,223h1v1h-1zM2010,240h1v1h-1zM2010,257h1v1h-1zM2010,275h1v1h-1zM2010,292h1v1h-1zM2010,309h1v1h-1zM2010,327h1v1h-1zM2010,344h1v1h-1zM2010,361h1v1h-1zM2010,378h1v1h-1zM2010,396h1v1h-1zM2010,413h1v1h-1zM2010,430h1v1h-1zM2010,448h1v1h-1zM2010,465h1v1h-1zM2010,482h1v1h-1zM2010,499h1v1h-1zM2010,517h1v1h-1zM2010,534h1v1h-1zM2010,551h1v1h-1zM2010,569h1v1h-1zM2010,586h1v1h-1zM2010,603h1v1h-1zM2010,621h1v1h-1zM2010,638h1v1h-1zM2010,655h1v1h-1zM2010,672h1v1h-1zM2010,690h1v1h-1zM2010,707h1v1h-1zM2010,724h1v1h-1zM2010,742h1v1h-1zM2010,759h1v1h-1zM2010,776h1v1h-1zM2010,793h1v1h-1zM2010,811h1v1h-1zM2010,828h1v1h-1zM2010,845h1v1h-1zM2010,863h1v1h-1zM2010,880h1v1h-1zM2010,897h1v1h-1zM2027,33h1v1h-1zM2027,50h1v1h-1zM2027,67h1v1h-1zM2027,85h1v1h-1zM2027,102h1v1h-1zM2027,119h1v1h-1zM2027,136h1v1h-1zM2027,154h1v1h-1zM2027,171h1v1h-1zM2027,188h1v1h-1zM2027,206h1v1h-1zM2027,223h1v1h-1zM2027,240h1v1h-1zM2027,257h1v1h-1zM2027,275h1v1h-1zM2027,292h1v1h-1zM2027,309h1v1h-1zM2027,327h1v1h-1zM2027,344h1v1h-1zM2027,361h1v1h-1zM2027,378h1v1h-1zM2027,396h1v1h-1zM2027,413h1v1h-1zM2027,430h1v1h-1zM2027,448h1v1h-1zM2027,465h1v1h-1zM2027,482h1v1h-1zM2027,499h1v1h-1zM2027,517h1v1h-1zM2027,534h1v1h-1zM2027,551h1v1h-1zM2027,569h1v1h-1zM2027,586h1v1h-1zM2027,603h1v1h-1zM2027,621h1v1h-1zM2027,638h1v1h-1zM2027,655h1v1h-1zM2027,672h1v1h-1zM2027,690h1v1h-1zM2027,707h1v1h-1zM2027,724h1v1h-1zM2027,742h1v1h-1zM2027,759h1v1h-1zM2027,776h1v1h-1zM2027,793h1v1h-1zM2027,811h1v1h-1zM2027,828h1v1h-1zM2027,845h1v1h-1zM2027,863h1v1h-1zM2027,880h1v1h-1zM2027,897h1v1h-1zM2044,33h1v1h-1zM2044,50h1v1h-1zM2044,67h1v1h-1zM2044,85h1v1h-1zM2044,102h1v1h-1zM2044,119h1v1h-1zM2044,136h1v1h-1zM2044,154h1v1h-1zM2044,171h1v1h-1zM2044,188h1v1h-1zM2044,206h1v1h-1zM2044,223h1v1h-1zM2044,240h1v1h-1zM2044,257h1v1h-1zM2044,275h1v1h-1zM2044,292h1v1h-1zM2044,309h1v1h-1zM2044,327h1v1h-1zM2044,344h1v1h-1zM2044,361h1v1h-1zM2044,378h1v1h-1zM2044,396h1v1h-1zM2044,413h1v1h-1zM2044,430h1v1h-1zM2044,448h1v1h-1zM2044,465h1v1h-1zM2044,482h1v1h-1zM2044,499h1v1h-1zM2044,517h1v1h-1zM2044,534h1v1h-1zM2044,551h1v1h-1zM2044,569h1v1h-1zM2044,586h1v1h-1zM2044,603h1v1h-1zM2044,621h1v1h-1zM2044,638h1v1h-1zM2044,655h1v1h-1zM2044,672h1v1h-1zM2044,690h1v1h-1zM2044,707h1v1h-1zM2044,724h1v1h-1zM2044,742h1v1h-1zM2044,759h1v1h-1zM2044,776h1v1h-1zM2044,793h1v1h-1zM2044,811h1v1h-1zM2044,828h1v1h-1zM2044,845h1v1h-1zM2044,863h1v1h-1zM2044,880h1v1h-1zM2044,897h1v1h-1zM2062,33h1v1h-1zM2062,50h1v1h-1zM2062,67h1v1h-1zM2062,85h1v1h-1zM2062,102h1v1h-1zM2062,119h1v1h-1zM2062,136h1v1h-1zM2062,154h1v1h-1zM2062,171h1v1h-1zM2062,188h1v1h-1zM2062,206h1v1h-1zM2062,223h1v1h-1zM2062,240h1v1h-1zM2062,257h1v1h-1zM2062,275h1v1h-1zM2062,292h1v1h-1zM2062,309h1v1h-1zM2062,327h1v1h-1zM2062,344h1v1h-1zM2062,361h1v1h-1zM2062,378h1v1h-1zM2062,396h1v1h-1zM2062,413h1v1h-1zM2062,430h1v1h-1zM2062,448h1v1h-1zM2062,465h1v1h-1zM2062,482h1v1h-1zM2062,499h1v1h-1zM2062,517h1v1h-1zM2062,534h1v1h-1zM2062,551h1v1h-1zM2062,569h1v1h-1zM2062,586h1v1h-1zM2062,603h1v1h-1zM2062,621h1v1h-1zM2062,638h1v1h-1zM2062,655h1v1h-1zM2062,672h1v1h-1zM2062,690h1v1h-1zM2062,707h1v1h-1zM2062,724h1v1h-1zM2062,742h1v1h-1zM2062,759h1v1h-1zM2062,776h1v1h-1zM2062,793h1v1h-1zM2062,811h1v1h-1zM2062,828h1v1h-1zM2062,845h1v1h-1zM2062,863h1v1h-1zM2062,880h1v1h-1zM2062,897h1v1h-1zM2079,33h1v1h-1zM2079,50h1v1h-1zM2079,67h1v1h-1zM2079,85h1v1h-1zM2079,102h1v1h-1zM2079,119h1v1h-1zM2079,136h1v1h-1zM2079,154h1v1h-1zM2079,171h1v1h-1zM2079,188h1v1h-1zM2079,206h1v1h-1zM2079,223h1v1h-1zM2079,240h1v1h-1zM2079,257h1v1h-1zM2079,275h1v1h-1zM2079,292h1v1h-1zM2079,309h1v1h-1zM2079,327h1v1h-1zM2079,344h1v1h-1zM2079,361h1v1h-1zM2079,378h1v1h-1zM2079,396h1v1h-1zM2079,413h1v1h-1zM2079,430h1v1h-1zM2079,448h1v1h-1zM2079,465h1v1h-1zM2079,482h1v1h-1zM2079,499h1v1h-1zM2079,517h1v1h-1zM2079,534h1v1h-1zM2079,551h1v1h-1zM2079,569h1v1h-1zM2079,586h1v1h-1zM2079,603h1v1h-1zM2079,621h1v1h-1zM2079,638h1v1h-1zM2079,655h1v1h-1zM2079,672h1v1h-1zM2079,690h1v1h-1zM2079,707h1v1h-1zM2079,724h1v1h-1zM2079,742h1v1h-1zM2079,759h1v1h-1zM2079,776h1v1h-1zM2079,793h1v1h-1zM2079,811h1v1h-1zM2079,828h1v1h-1zM2079,845h1v1h-1zM2079,863h1v1h-1zM2079,880h1v1h-1zM2079,897h1v1h-1zM2096,33h1v1h-1zM2096,50h1v1h-1zM2096,67h1v1h-1zM2096,85h1v1h-1zM2096,102h1v1h-1zM2096,119h1v1h-1zM2096,136h1v1h-1zM2096,154h1v1h-1zM2096,171h1v1h-1zM2096,188h1v1h-1zM2096,206h1v1h-1zM2096,223h1v1h-1zM2096,240h1v1h-1zM2096,257h1v1h-1zM2096,275h1v1h-1zM2096,292h1v1h-1zM2096,309h1v1h-1zM2096,327h1v1h-1zM2096,344h1v1h-1zM2096,361h1v1h-1zM2096,378h1v1h-1zM2096,396h1v1h-1zM2096,413h1v1h-1zM2096,430h1v1h-1zM2096,448h1v1h-1zM2096,465h1v1h-1zM2096,482h1v1h-1zM2096,499h1v1h-1zM2096,517h1v1h-1zM2096,534h1v1h-1zM2096,551h1v1h-1zM2096,569h1v1h-1zM2096,586h1v1h-1zM2096,603h1v1h-1zM2096,621h1v1h-1zM2096,638h1v1h-1zM2096,655h1v1h-1zM2096,672h1v1h-1zM2096,690h1v1h-1zM2096,707h1v1h-1zM2096,724h1v1h-1zM2096,742h1v1h-1zM2096,759h1v1h-1zM2096,776h1v1h-1zM2096,793h1v1h-1zM2096,811h1v1h-1zM2096,828h1v1h-1zM2096,845h1v1h-1zM2096,863h1v1h-1zM2096,880h1v1h-1zM2096,897h1v1h-1zM2114,33h1v1h-1zM2114,50h1v1h-1zM2114,67h1v1h-1zM2114,85h1v1h-1zM2114,102h1v1h-1zM2114,119h1v1h-1zM2114,136h1v1h-1zM2114,154h1v1h-1zM2114,171h1v1h-1zM2114,188h1v1h-1zM2114,206h1v1h-1zM2114,223h1v1h-1zM2114,240h1v1h-1zM2114,257h1v1h-1zM2114,275h1v1h-1zM2114,292h1v1h-1zM2114,309h1v1h-1zM2114,327h1v1h-1zM2114,344h1v1h-1zM2114,361h1v1h-1zM2114,378h1v1h-1zM2114,396h1v1h-1zM2114,413h1v1h-1zM2114,430h1v1h-1zM2114,448h1v1h-1zM2114,465h1v1h-1zM2114,482h1v1h-1zM2114,499h1v1h-1zM2114,517h1v1h-1zM2114,534h1v1h-1zM2114,551h1v1h-1zM2114,569h1v1h-1zM2114,586h1v1h-1zM2114,603h1v1h-1zM2114,621h1v1h-1zM2114,638h1v1h-1zM2114,655h1v1h-1zM2114,672h1v1h-1zM2114,690h1v1h-1zM2114,707h1v1h-1zM2114,724h1v1h-1zM2114,742h1v1h-1zM2114,759h1v1h-1zM2114,776h1v1h-1zM2114,793h1v1h-1zM2114,811h1v1h-1zM2114,828h1v1h-1zM2114,845h1v1h-1zM2114,863h1v1h-1zM2114,880h1v1h-1zM2114,897h1v1h-1zM2131,33h1v1h-1zM2131,50h1v1h-1zM2131,67h1v1h-1zM2131,85h1v1h-1zM2131,102h1v1h-1zM2131,119h1v1h-1zM2131,136h1v1h-1zM2131,154h1v1h-1zM2131,171h1v1h-1zM2131,188h1v1h-1zM2131,206h1v1h-1zM2131,223h1v1h-1zM2131,240h1v1h-1zM2131,257h1v1h-1zM2131,275h1v1h-1zM2131,292h1v1h-1zM2131,309h1v1h-1zM2131,327h1v1h-1zM2131,344h1v1h-1zM2131,361h1v1h-1zM2131,378h1v1h-1zM2131,396h1v1h-1zM2131,413h1v1h-1zM2131,430h1v1h-1zM2131,448h1v1h-1zM2131,465h1v1h-1zM2131,482h1v1h-1zM2131,499h1v1h-1zM2131,517h1v1h-1zM2131,534h1v1h-1zM2131,551h1v1h-1zM2131,569h1v1h-1zM2131,586h1v1h-1zM2131,603h1v1h-1zM2131,621h1v1h-1zM2131,638h1v1h-1zM2131,655h1v1h-1zM2131,672h1v1h-1zM2131,690h1v1h-1zM2131,707h1v1h-1zM2131,724h1v1h-1zM2131,742h1v1h-1zM2131,759h1v1h-1zM2131,776h1v1h-1zM2131,793h1v1h-1zM2131,811h1v1h-1zM2131,828h1v1h-1zM2131,845h1v1h-1zM2131,863h1v1h-1zM2131,880h1v1h-1zM2131,897h1v1h-1zM2148,33h1v1h-1zM2148,50h1v1h-1zM2148,67h1v1h-1zM2148,85h1v1h-1zM2148,102h1v1h-1zM2148,119h1v1h-1zM2148,136h1v1h-1zM2148,154h1v1h-1zM2148,171h1v1h-1zM2148,188h1v1h-1zM2148,206h1v1h-1zM2148,223h1v1h-1zM2148,240h1v1h-1zM2148,257h1v1h-1zM2148,275h1v1h-1zM2148,292h1v1h-1zM2148,309h1v1h-1zM2148,327h1v1h-1zM2148,344h1v1h-1zM2148,361h1v1h-1zM2148,378h1v1h-1zM2148,396h1v1h-1zM2148,413h1v1h-1zM2148,430h1v1h-1zM2148,448h1v1h-1zM2148,465h1v1h-1zM2148,482h1v1h-1zM2148,499h1v1h-1zM2148,517h1v1h-1zM2148,534h1v1h-1zM2148,551h1v1h-1zM2148,569h1v1h-1zM2148,586h1v1h-1zM2148,603h1v1h-1zM2148,621h1v1h-1zM2148,638h1v1h-1zM2148,655h1v1h-1zM2148,672h1v1h-1zM2148,690h1v1h-1zM2148,707h1v1h-1zM2148,724h1v1h-1zM2148,742h1v1h-1zM2148,759h1v1h-1zM2148,776h1v1h-1zM2148,793h1v1h-1zM2148,811h1v1h-1zM2148,828h1v1h-1zM2148,845h1v1h-1zM2148,863h1v1h-1zM2148,880h1v1h-1zM2148,897h1v1h-1zM2165,33h1v1h-1zM2165,50h1v1h-1zM2165,67h1v1h-1zM2165,85h1v1h-1zM2165,102h1v1h-1zM2165,119h1v1h-1zM2165,136h1v1h-1zM2165,154h1v1h-1zM2165,171h1v1h-1zM2165,188h1v1h-1zM2165,206h1v1h-1zM2165,223h1v1h-1zM2165,240h1v1h-1zM2165,257h1v1h-1zM2165,275h1v1h-1zM2165,292h1v1h-1zM2165,309h1v1h-1zM2165,327h1v1h-1zM2165,344h1v1h-1zM2165,361h1v1h-1zM2165,378h1v1h-1zM2165,396h1v1h-1zM2165,413h1v1h-1zM2165,430h1v1h-1zM2165,448h1v1h-1zM2165,465h1v1h-1zM2165,482h1v1h-1zM2165,499h1v1h-1zM2165,517h1v1h-1zM2165,534h1v1h-1zM2165,551h1v1h-1zM2165,569h1v1h-1zM2165,586h1v1h-1zM2165,603h1v1h-1zM2165,621h1v1h-1zM2165,638h1v1h-1zM2165,655h1v1h-1zM2165,672h1v1h-1zM2165,690h1v1h-1zM2165,707h1v1h-1zM2165,724h1v1h-1zM2165,742h1v1h-1zM2165,759h1v1h-1zM2165,776h1v1h-1zM2165,793h1v1h-1zM2165,811h1v1h-1zM2165,828h1v1h-1zM2165,845h1v1h-1zM2165,863h1v1h-1zM2165,880h1v1h-1zM2165,897h1v1h-1zM2183,33h1v1h-1zM2183,50h1v1h-1zM2183,67h1v1h-1zM2183,85h1v1h-1zM2183,102h1v1h-1zM2183,119h1v1h-1zM2183,136h1v1h-1zM2183,154h1v1h-1zM2183,171h1v1h-1zM2183,188h1v1h-1zM2183,206h1v1h-1zM2183,223h1v1h-1zM2183,240h1v1h-1zM2183,257h1v1h-1zM2183,275h1v1h-1zM2183,292h1v1h-1zM2183,309h1v1h-1zM2183,327h1v1h-1zM2183,344h1v1h-1zM2183,361h1v1h-1zM2183,378h1v1h-1zM2183,396h1v1h-1zM2183,413h1v1h-1zM2183,430h1v1h-1zM2183,448h1v1h-1zM2183,465h1v1h-1zM2183,482h1v1h-1zM2183,499h1v1h-1zM2183,517h1v1h-1zM2183,534h1v1h-1zM2183,551h1v1h-1zM2183,569h1v1h-1zM2183,586h1v1h-1zM2183,603h1v1h-1zM2183,621h1v1h-1zM2183,638h1v1h-1zM2183,655h1v1h-1zM2183,672h1v1h-1zM2183,690h1v1h-1zM2183,707h1v1h-1zM2183,724h1v1h-1zM2183,742h1v1h-1zM2183,759h1v1h-1zM2183,776h1v1h-1zM2183,793h1v1h-1zM2183,811h1v1h-1zM2183,828h1v1h-1zM2183,845h1v1h-1zM2183,863h1v1h-1zM2183,880h1v1h-1zM2183,897h1v1h-1zM2200,33h1v1h-1zM2200,50h1v1h-1zM2200,67h1v1h-1zM2200,85h1v1h-1zM2200,102h1v1h-1zM2200,119h1v1h-1zM2200,136h1v1h-1zM2200,154h1v1h-1zM2200,171h1v1h-1zM2200,188h1v1h-1zM2200,206h1v1h-1zM2200,223h1v1h-1zM2200,240h1v1h-1zM2200,257h1v1h-1zM2200,275h1v1h-1zM2200,292h1v1h-1zM2200,309h1v1h-1zM2200,327h1v1h-1zM2200,344h1v1h-1zM2200,361h1v1h-1zM2200,378h1v1h-1zM2200,396h1v1h-1zM2200,413h1v1h-1zM2200,430h1v1h-1zM2200,448h1v1h-1zM2200,465h1v1h-1zM2200,482h1v1h-1zM2200,499h1v1h-1zM2200,517h1v1h-1zM2200,534h1v1h-1zM2200,551h1v1h-1zM2200,569h1v1h-1zM2200,586h1v1h-1zM2200,603h1v1h-1zM2200,621h1v1h-1zM2200,638h1v1h-1zM2200,655h1v1h-1zM2200,672h1v1h-1zM2200,690h1v1h-1zM2200,707h1v1h-1zM2200,724h1v1h-1zM2200,742h1v1h-1zM2200,759h1v1h-1zM2200,776h1v1h-1zM2200,793h1v1h-1zM2200,811h1v1h-1zM2200,828h1v1h-1zM2200,845h1v1h-1zM2200,863h1v1h-1zM2200,880h1v1h-1zM2200,897h1v1h-1zM2217,33h1v1h-1zM2217,50h1v1h-1zM2217,67h1v1h-1zM2217,85h1v1h-1zM2217,102h1v1h-1zM2217,119h1v1h-1zM2217,136h1v1h-1zM2217,154h1v1h-1zM2217,171h1v1h-1zM2217,188h1v1h-1zM2217,206h1v1h-1zM2217,223h1v1h-1zM2217,240h1v1h-1zM2217,257h1v1h-1zM2217,275h1v1h-1zM2217,292h1v1h-1zM2217,309h1v1h-1zM2217,327h1v1h-1zM2217,344h1v1h-1zM2217,361h1v1h-1zM2217,378h1v1h-1zM2217,396h1v1h-1zM2217,413h1v1h-1zM2217,430h1v1h-1zM2217,448h1v1h-1zM2217,465h1v1h-1zM2217,482h1v1h-1zM2217,499h1v1h-1zM2217,517h1v1h-1zM2217,534h1v1h-1zM2217,551h1v1h-1zM2217,569h1v1h-1zM2217,586h1v1h-1zM2217,603h1v1h-1zM2217,621h1v1h-1zM2217,638h1v1h-1zM2217,655h1v1h-1zM2217,672h1v1h-1zM2217,690h1v1h-1zM2217,707h1v1h-1zM2217,724h1v1h-1zM2217,742h1v1h-1zM2217,759h1v1h-1zM2217,776h1v1h-1zM2217,793h1v1h-1zM2217,811h1v1h-1zM2217,828h1v1h-1zM2217,845h1v1h-1zM2217,863h1v1h-1zM2217,880h1v1h-1zM2217,897h1v1h-1zM2235,33h1v1h-1zM2235,50h1v1h-1zM2235,67h1v1h-1zM2235,85h1v1h-1zM2235,102h1v1h-1zM2235,119h1v1h-1zM2235,136h1v1h-1zM2235,154h1v1h-1zM2235,171h1v1h-1zM2235,188h1v1h-1zM2235,206h1v1h-1zM2235,223h1v1h-1zM2235,240h1v1h-1zM2235,257h1v1h-1zM2235,275h1v1h-1zM2235,292h1v1h-1zM2235,309h1v1h-1zM2235,327h1v1h-1zM2235,344h1v1h-1zM2235,361h1v1h-1zM2235,378h1v1h-1zM2235,396h1v1h-1zM2235,413h1v1h-1zM2235,430h1v1h-1zM2235,448h1v1h-1zM2235,465h1v1h-1zM2235,482h1v1h-1zM2235,499h1v1h-1zM2235,517h1v1h-1zM2235,534h1v1h-1zM2235,551h1v1h-1zM2235,569h1v1h-1zM2235,586h1v1h-1zM2235,603h1v1h-1zM2235,621h1v1h-1zM2235,638h1v1h-1zM2235,655h1v1h-1zM2235,672h1v1h-1zM2235,690h1v1h-1zM2235,707h1v1h-1zM2235,724h1v1h-1zM2235,742h1v1h-1zM2235,759h1v1h-1zM2235,776h1v1h-1zM2235,793h1v1h-1zM2235,811h1v1h-1zM2235,828h1v1h-1zM2235,845h1v1h-1zM2235,863h1v1h-1zM2235,880h1v1h-1zM2235,897h1v1h-1zM2252,33h1v1h-1zM2252,50h1v1h-1zM2252,67h1v1h-1zM2252,85h1v1h-1zM2252,102h1v1h-1zM2252,119h1v1h-1zM2252,136h1v1h-1zM2252,154h1v1h-1zM2252,171h1v1h-1zM2252,188h1v1h-1zM2252,206h1v1h-1zM2252,223h1v1h-1zM2252,240h1v1h-1zM2252,257h1v1h-1zM2252,275h1v1h-1zM2252,292h1v1h-1zM2252,309h1v1h-1zM2252,327h1v1h-1zM2252,344h1v1h-1zM2252,361h1v1h-1zM2252,378h1v1h-1zM2252,396h1v1h-1zM2252,413h1v1h-1zM2252,430h1v1h-1zM2252,448h1v1h-1zM2252,465h1v1h-1zM2252,482h1v1h-1zM2252,499h1v1h-1zM2252,517h1v1h-1zM2252,534h1v1h-1zM2252,551h1v1h-1zM2252,569h1v1h-1zM2252,586h1v1h-1zM2252,603h1v1h-1zM2252,621h1v1h-1zM2252,638h1v1h-1zM2252,655h1v1h-1zM2252,672h1v1h-1zM2252,690h1v1h-1zM2252,707h1v1h-1zM2252,724h1v1h-1zM2252,742h1v1h-1zM2252,759h1v1h-1zM2252,776h1v1h-1zM2252,793h1v1h-1zM2252,811h1v1h-1zM2252,828h1v1h-1zM2252,845h1v1h-1zM2252,863h1v1h-1zM2252,880h1v1h-1zM2252,897h1v1h-1zM2269,33h1v1h-1zM2269,50h1v1h-1zM2269,67h1v1h-1zM2269,85h1v1h-1zM2269,102h1v1h-1zM2269,119h1v1h-1zM2269,136h1v1h-1zM2269,154h1v1h-1zM2269,171h1v1h-1zM2269,188h1v1h-1zM2269,206h1v1h-1zM2269,223h1v1h-1zM2269,240h1v1h-1zM2269,257h1v1h-1zM2269,275h1v1h-1zM2269,292h1v1h-1zM2269,309h1v1h-1zM2269,327h1v1h-1zM2269,344h1v1h-1zM2269,361h1v1h-1zM2269,378h1v1h-1zM2269,396h1v1h-1zM2269,413h1v1h-1zM2269,430h1v1h-1zM2269,448h1v1h-1zM2269,465h1v1h-1zM2269,482h1v1h-1zM2269,499h1v1h-1zM2269,517h1v1h-1zM2269,534h1v1h-1zM2269,551h1v1h-1zM2269,569h1v1h-1zM2269,586h1v1h-1zM2269,603h1v1h-1zM2269,621h1v1h-1zM2269,638h1v1h-1zM2269,655h1v1h-1zM2269,672h1v1h-1zM2269,690h1v1h-1zM2269,707h1v1h-1zM2269,724h1v1h-1zM2269,742h1v1h-1zM2269,759h1v1h-1zM2269,776h1v1h-1zM2269,793h1v1h-1zM2269,811h1v1h-1zM2269,828h1v1h-1zM2269,845h1v1h-1zM2269,863h1v1h-1zM2269,880h1v1h-1zM2269,897h1v1h-1zM2286,33h1v1h-1zM2286,50h1v1h-1zM2286,67h1v1h-1zM2286,85h1v1h-1zM2286,102h1v1h-1zM2286,119h1v1h-1zM2286,136h1v1h-1zM2286,154h1v1h-1zM2286,171h1v1h-1zM2286,188h1v1h-1zM2286,206h1v1h-1zM2286,223h1v1h-1zM2286,240h1v1h-1zM2286,257h1v1h-1zM2286,275h1v1h-1zM2286,292h1v1h-1zM2286,309h1v1h-1zM2286,327h1v1h-1zM2286,344h1v1h-1zM2286,361h1v1h-1zM2286,378h1v1h-1zM2286,396h1v1h-1zM2286,413h1v1h-1zM2286,430h1v1h-1zM2286,448h1v1h-1zM2286,465h1v1h-1zM2286,482h1v1h-1zM2286,499h1v1h-1zM2286,517h1v1h-1zM2286,534h1v1h-1zM2286,551h1v1h-1zM2286,569h1v1h-1zM2286,586h1v1h-1zM2286,603h1v1h-1zM2286,621h1v1h-1zM2286,638h1v1h-1zM2286,655h1v1h-1zM2286,672h1v1h-1zM2286,690h1v1h-1zM2286,707h1v1h-1zM2286,724h1v1h-1zM2286,742h1v1h-1zM2286,759h1v1h-1zM2286,776h1v1h-1zM2286,793h1v1h-1zM2286,811h1v1h-1zM2286,828h1v1h-1zM2286,845h1v1h-1zM2286,863h1v1h-1zM2286,880h1v1h-1zM2286,897h1v1h-1zM2304,33h1v1h-1zM2304,50h1v1h-1zM2304,67h1v1h-1zM2304,85h1v1h-1zM2304,102h1v1h-1zM2304,119h1v1h-1zM2304,136h1v1h-1zM2304,154h1v1h-1zM2304,171h1v1h-1zM2304,188h1v1h-1zM2304,206h1v1h-1zM2304,223h1v1h-1zM2304,240h1v1h-1zM2304,257h1v1h-1zM2304,275h1v1h-1zM2304,292h1v1h-1zM2304,309h1v1h-1zM2304,327h1v1h-1zM2304,344h1v1h-1zM2304,361h1v1h-1zM2304,378h1v1h-1zM2304,396h1v1h-1zM2304,413h1v1h-1zM2304,430h1v1h-1zM2304,448h1v1h-1zM2304,465h1v1h-1zM2304,482h1v1h-1zM2304,499h1v1h-1zM2304,517h1v1h-1zM2304,534h1v1h-1zM2304,551h1v1h-1zM2304,569h1v1h-1zM2304,586h1v1h-1zM2304,603h1v1h-1zM2304,621h1v1h-1zM2304,638h1v1h-1zM2304,655h1v1h-1zM2304,672h1v1h-1zM2304,690h1v1h-1zM2304,707h1v1h-1zM2304,724h1v1h-1zM2304,742h1v1h-1zM2304,759h1v1h-1zM2304,776h1v1h-1zM2304,793h1v1h-1zM2304,811h1v1h-1zM2304,828h1v1h-1zM2304,845h1v1h-1zM2304,863h1v1h-1zM2304,880h1v1h-1zM2304,897h1v1h-1zM2321,33h1v1h-1zM2321,50h1v1h-1zM2321,67h1v1h-1zM2321,85h1v1h-1zM2321,102h1v1h-1zM2321,119h1v1h-1zM2321,136h1v1h-1zM2321,154h1v1h-1zM2321,171h1v1h-1zM2321,188h1v1h-1zM2321,206h1v1h-1zM2321,223h1v1h-1zM2321,240h1v1h-1zM2321,257h1v1h-1zM2321,275h1v1h-1zM2321,292h1v1h-1zM2321,309h1v1h-1zM2321,327h1v1h-1zM2321,344h1v1h-1zM2321,361h1v1h-1zM2321,378h1v1h-1zM2321,396h1v1h-1zM2321,413h1v1h-1zM2321,430h1v1h-1zM2321,448h1v1h-1zM2321,465h1v1h-1zM2321,482h1v1h-1zM2321,499h1v1h-1zM2321,517h1v1h-1zM2321,534h1v1h-1zM2321,551h1v1h-1zM2321,569h1v1h-1zM2321,586h1v1h-1zM2321,603h1v1h-1zM2321,621h1v1h-1zM2321,638h1v1h-1zM2321,655h1v1h-1zM2321,672h1v1h-1zM2321,690h1v1h-1zM2321,707h1v1h-1zM2321,724h1v1h-1zM2321,742h1v1h-1zM2321,759h1v1h-1zM2321,776h1v1h-1zM2321,793h1v1h-1zM2321,811h1v1h-1zM2321,828h1v1h-1zM2321,845h1v1h-1zM2321,863h1v1h-1zM2321,880h1v1h-1zM2321,897h1v1h-1zM2338,33h1v1h-1zM2338,50h1v1h-1zM2338,67h1v1h-1zM2338,85h1v1h-1zM2338,102h1v1h-1zM2338,119h1v1h-1zM2338,136h1v1h-1zM2338,154h1v1h-1zM2338,171h1v1h-1zM2338,188h1v1h-1zM2338,206h1v1h-1zM2338,223h1v1h-1zM2338,240h1v1h-1zM2338,257h1v1h-1zM2338,275h1v1h-1zM2338,292h1v1h-1zM2338,309h1v1h-1zM2338,327h1v1h-1zM2338,344h1v1h-1zM2338,361h1v1h-1zM2338,378h1v1h-1zM2338,396h1v1h-1zM2338,413h1v1h-1zM2338,430h1v1h-1zM2338,448h1v1h-1zM2338,465h1v1h-1zM2338,482h1v1h-1zM2338,499h1v1h-1zM2338,517h1v1h-1zM2338,534h1v1h-1zM2338,551h1v1h-1zM2338,569h1v1h-1zM2338,586h1v1h-1zM2338,603h1v1h-1zM2338,621h1v1h-1zM2338,638h1v1h-1zM2338,655h1v1h-1zM2338,672h1v1h-1zM2338,690h1v1h-1zM2338,707h1v1h-1zM2338,724h1v1h-1zM2338,742h1v1h-1zM2338,759h1v1h-1zM2338,776h1v1h-1zM2338,793h1v1h-1zM2338,811h1v1h-1zM2338,828h1v1h-1zM2338,845h1v1h-1zM2338,863h1v1h-1zM2338,880h1v1h-1zM2338,897h1v1h-1zM2356,33h1v1h-1zM2356,50h1v1h-1zM2356,67h1v1h-1zM2356,85h1v1h-1zM2356,102h1v1h-1zM2356,119h1v1h-1zM2356,136h1v1h-1zM2356,154h1v1h-1zM2356,171h1v1h-1zM2356,188h1v1h-1zM2356,206h1v1h-1zM2356,223h1v1h-1zM2356,240h1v1h-1zM2356,257h1v1h-1zM2356,275h1v1h-1zM2356,292h1v1h-1zM2356,309h1v1h-1zM2356,327h1v1h-1zM2356,344h1v1h-1zM2356,361h1v1h-1zM2356,378h1v1h-1zM2356,396h1v1h-1zM2356,413h1v1h-1zM2356,430h1v1h-1zM2356,448h1v1h-1zM2356,465h1v1h-1zM2356,482h1v1h-1zM2356,499h1v1h-1zM2356,517h1v1h-1zM2356,534h1v1h-1zM2356,551h1v1h-1zM2356,569h1v1h-1zM2356,586h1v1h-1zM2356,603h1v1h-1zM2356,621h1v1h-1zM2356,638h1v1h-1zM2356,655h1v1h-1zM2356,672h1v1h-1zM2356,690h1v1h-1zM2356,707h1v1h-1zM2356,724h1v1h-1zM2356,742h1v1h-1zM2356,759h1v1h-1zM2356,776h1v1h-1zM2356,793h1v1h-1zM2356,811h1v1h-1zM2356,828h1v1h-1zM2356,845h1v1h-1zM2356,863h1v1h-1zM2356,880h1v1h-1zM2356,897h1v1h-1zM2373,33h1v1h-1zM2373,50h1v1h-1zM2373,67h1v1h-1zM2373,85h1v1h-1zM2373,102h1v1h-1zM2373,119h1v1h-1zM2373,136h1v1h-1zM2373,154h1v1h-1zM2373,171h1v1h-1zM2373,188h1v1h-1zM2373,206h1v1h-1zM2373,223h1v1h-1zM2373,240h1v1h-1zM2373,257h1v1h-1zM2373,275h1v1h-1zM2373,292h1v1h-1zM2373,309h1v1h-1zM2373,327h1v1h-1zM2373,344h1v1h-1zM2373,361h1v1h-1zM2373,378h1v1h-1zM2373,396h1v1h-1zM2373,413h1v1h-1zM2373,430h1v1h-1zM2373,448h1v1h-1zM2373,465h1v1h-1zM2373,482h1v1h-1zM2373,499h1v1h-1zM2373,517h1v1h-1zM2373,534h1v1h-1zM2373,551h1v1h-1zM2373,569h1v1h-1zM2373,586h1v1h-1zM2373,603h1v1h-1zM2373,621h1v1h-1zM2373,638h1v1h-1zM2373,655h1v1h-1zM2373,672h1v1h-1zM2373,690h1v1h-1zM2373,707h1v1h-1zM2373,724h1v1h-1zM2373,742h1v1h-1zM2373,759h1v1h-1zM2373,776h1v1h-1zM2373,793h1v1h-1zM2373,811h1v1h-1zM2373,828h1v1h-1zM2373,845h1v1h-1zM2373,863h1v1h-1zM2373,880h1v1h-1zM2373,897h1v1h-1zM2390,33h1v1h-1zM2390,50h1v1h-1zM2390,67h1v1h-1zM2390,85h1v1h-1zM2390,102h1v1h-1zM2390,119h1v1h-1zM2390,136h1v1h-1zM2390,154h1v1h-1zM2390,171h1v1h-1zM2390,188h1v1h-1zM2390,206h1v1h-1zM2390,223h1v1h-1zM2390,240h1v1h-1zM2390,257h1v1h-1zM2390,275h1v1h-1zM2390,292h1v1h-1zM2390,309h1v1h-1zM2390,327h1v1h-1zM2390,344h1v1h-1zM2390,361h1v1h-1zM2390,378h1v1h-1zM2390,396h1v1h-1zM2390,413h1v1h-1zM2390,430h1v1h-1zM2390,448h1v1h-1zM2390,465h1v1h-1zM2390,482h1v1h-1zM2390,499h1v1h-1zM2390,517h1v1h-1zM2390,534h1v1h-1zM2390,551h1v1h-1zM2390,569h1v1h-1zM2390,586h1v1h-1zM2390,603h1v1h-1zM2390,621h1v1h-1zM2390,638h1v1h-1zM2390,655h1v1h-1zM2390,672h1v1h-1zM2390,690h1v1h-1zM2390,707h1v1h-1zM2390,724h1v1h-1zM2390,742h1v1h-1zM2390,759h1v1h-1zM2390,776h1v1h-1zM2390,793h1v1h-1zM2390,811h1v1h-1zM2390,828h1v1h-1zM2390,845h1v1h-1zM2390,863h1v1h-1zM2390,880h1v1h-1zM2390,897h1v1h-1zM2407,33h1v1h-1zM2407,50h1v1h-1zM2407,67h1v1h-1zM2407,85h1v1h-1zM2407,102h1v1h-1zM2407,119h1v1h-1zM2407,136h1v1h-1zM2407,154h1v1h-1zM2407,171h1v1h-1zM2407,188h1v1h-1zM2407,206h1v1h-1zM2407,223h1v1h-1zM2407,240h1v1h-1zM2407,257h1v1h-1zM2407,275h1v1h-1zM2407,292h1v1h-1zM2407,309h1v1h-1zM2407,327h1v1h-1zM2407,344h1v1h-1zM2407,361h1v1h-1zM2407,378h1v1h-1zM2407,396h1v1h-1zM2407,413h1v1h-1zM2407,430h1v1h-1zM2407,448h1v1h-1zM2407,465h1v1h-1zM2407,482h1v1h-1zM2407,499h1v1h-1zM2407,517h1v1h-1zM2407,534h1v1h-1zM2407,551h1v1h-1zM2407,569h1v1h-1zM2407,586h1v1h-1zM2407,603h1v1h-1zM2407,621h1v1h-1zM2407,638h1v1h-1zM2407,655h1v1h-1zM2407,672h1v1h-1zM2407,690h1v1h-1zM2407,707h1v1h-1zM2407,724h1v1h-1zM2407,742h1v1h-1zM2407,759h1v1h-1zM2407,776h1v1h-1zM2407,793h1v1h-1zM2407,811h1v1h-1zM2407,828h1v1h-1zM2407,845h1v1h-1zM2407,863h1v1h-1zM2407,880h1v1h-1zM2407,897h1v1h-1zM2425,33h1v1h-1zM2425,50h1v1h-1zM2425,67h1v1h-1zM2425,85h1v1h-1zM2425,102h1v1h-1zM2425,119h1v1h-1zM2425,136h1v1h-1zM2425,154h1v1h-1zM2425,171h1v1h-1zM2425,188h1v1h-1zM2425,206h1v1h-1zM2425,223h1v1h-1zM2425,240h1v1h-1zM2425,257h1v1h-1zM2425,275h1v1h-1zM2425,292h1v1h-1zM2425,309h1v1h-1zM2425,327h1v1h-1zM2425,344h1v1h-1zM2425,361h1v1h-1zM2425,378h1v1h-1zM2425,396h1v1h-1zM2425,413h1v1h-1zM2425,430h1v1h-1zM2425,448h1v1h-1zM2425,465h1v1h-1zM2425,482h1v1h-1zM2425,499h1v1h-1zM2425,517h1v1h-1zM2425,534h1v1h-1zM2425,551h1v1h-1zM2425,569h1v1h-1zM2425,586h1v1h-1zM2425,603h1v1h-1zM2425,621h1v1h-1zM2425,638h1v1h-1zM2425,655h1v1h-1zM2425,672h1v1h-1zM2425,690h1v1h-1zM2425,707h1v1h-1zM2425,724h1v1h-1zM2425,742h1v1h-1zM2425,759h1v1h-1zM2425,776h1v1h-1zM2425,793h1v1h-1zM2425,811h1v1h-1zM2425,828h1v1h-1zM2425,845h1v1h-1zM2425,863h1v1h-1zM2425,880h1v1h-1zM2425,897h1v1h-1zM2442,33h1v1h-1zM2442,50h1v1h-1zM2442,67h1v1h-1zM2442,85h1v1h-1zM2442,102h1v1h-1zM2442,119h1v1h-1zM2442,136h1v1h-1zM2442,154h1v1h-1zM2442,171h1v1h-1zM2442,188h1v1h-1zM2442,206h1v1h-1zM2442,223h1v1h-1zM2442,240h1v1h-1zM2442,257h1v1h-1zM2442,275h1v1h-1zM2442,292h1v1h-1zM2442,309h1v1h-1zM2442,327h1v1h-1zM2442,344h1v1h-1zM2442,361h1v1h-1zM2442,378h1v1h-1zM2442,396h1v1h-1zM2442,413h1v1h-1zM2442,430h1v1h-1zM2442,448h1v1h-1zM2442,465h1v1h-1zM2442,482h1v1h-1zM2442,499h1v1h-1zM2442,517h1v1h-1zM2442,534h1v1h-1zM2442,551h1v1h-1zM2442,569h1v1h-1zM2442,586h1v1h-1zM2442,603h1v1h-1zM2442,621h1v1h-1zM2442,638h1v1h-1zM2442,655h1v1h-1zM2442,672h1v1h-1zM2442,690h1v1h-1zM2442,707h1v1h-1zM2442,724h1v1h-1zM2442,742h1v1h-1zM2442,759h1v1h-1zM2442,776h1v1h-1zM2442,793h1v1h-1zM2442,811h1v1h-1zM2442,828h1v1h-1zM2442,845h1v1h-1zM2442,863h1v1h-1zM2442,880h1v1h-1zM2442,897h1v1h-1zM2459,33h1v1h-1zM2459,50h1v1h-1zM2459,67h1v1h-1zM2459,85h1v1h-1zM2459,102h1v1h-1zM2459,119h1v1h-1zM2459,136h1v1h-1zM2459,154h1v1h-1zM2459,171h1v1h-1zM2459,188h1v1h-1zM2459,206h1v1h-1zM2459,223h1v1h-1zM2459,240h1v1h-1zM2459,257h1v1h-1zM2459,275h1v1h-1zM2459,292h1v1h-1zM2459,309h1v1h-1zM2459,327h1v1h-1zM2459,344h1v1h-1zM2459,361h1v1h-1zM2459,378h1v1h-1zM2459,396h1v1h-1zM2459,413h1v1h-1zM2459,430h1v1h-1zM2459,448h1v1h-1zM2459,465h1v1h-1zM2459,482h1v1h-1zM2459,499h1v1h-1zM2459,517h1v1h-1zM2459,534h1v1h-1zM2459,551h1v1h-1zM2459,569h1v1h-1zM2459,586h1v1h-1zM2459,603h1v1h-1zM2459,621h1v1h-1zM2459,638h1v1h-1zM2459,655h1v1h-1zM2459,672h1v1h-1zM2459,690h1v1h-1zM2459,707h1v1h-1zM2459,724h1v1h-1zM2459,742h1v1h-1zM2459,759h1v1h-1zM2459,776h1v1h-1zM2459,793h1v1h-1zM2459,811h1v1h-1zM2459,828h1v1h-1zM2459,845h1v1h-1zM2459,863h1v1h-1zM2459,880h1v1h-1zM2459,897h1v1h-1zM2477,33h1v1h-1zM2477,50h1v1h-1zM2477,67h1v1h-1zM2477,85h1v1h-1zM2477,102h1v1h-1zM2477,119h1v1h-1zM2477,136h1v1h-1zM2477,154h1v1h-1zM2477,171h1v1h-1zM2477,188h1v1h-1zM2477,206h1v1h-1zM2477,223h1v1h-1zM2477,240h1v1h-1zM2477,257h1v1h-1zM2477,275h1v1h-1zM2477,292h1v1h-1zM2477,309h1v1h-1zM2477,327h1v1h-1zM2477,344h1v1h-1zM2477,361h1v1h-1zM2477,378h1v1h-1zM2477,396h1v1h-1zM2477,413h1v1h-1zM2477,430h1v1h-1zM2477,448h1v1h-1zM2477,465h1v1h-1zM2477,482h1v1h-1zM2477,499h1v1h-1zM2477,517h1v1h-1zM2477,534h1v1h-1zM2477,551h1v1h-1zM2477,569h1v1h-1zM2477,586h1v1h-1zM2477,603h1v1h-1zM2477,621h1v1h-1zM2477,638h1v1h-1zM2477,655h1v1h-1zM2477,672h1v1h-1zM2477,690h1v1h-1zM2477,707h1v1h-1zM2477,724h1v1h-1zM2477,742h1v1h-1zM2477,759h1v1h-1zM2477,776h1v1h-1zM2477,793h1v1h-1zM2477,811h1v1h-1zM2477,828h1v1h-1zM2477,845h1v1h-1zM2477,863h1v1h-1zM2477,880h1v1h-1zM2477,897h1v1h-1zM2494,33h1v1h-1zM2494,50h1v1h-1zM2494,67h1v1h-1zM2494,85h1v1h-1zM2494,102h1v1h-1zM2494,119h1v1h-1zM2494,136h1v1h-1zM2494,154h1v1h-1zM2494,171h1v1h-1zM2494,188h1v1h-1zM2494,206h1v1h-1zM2494,223h1v1h-1zM2494,240h1v1h-1zM2494,257h1v1h-1zM2494,275h1v1h-1zM2494,292h1v1h-1zM2494,309h1v1h-1zM2494,327h1v1h-1zM2494,344h1v1h-1zM2494,361h1v1h-1zM2494,378h1v1h-1zM2494,396h1v1h-1zM2494,413h1v1h-1zM2494,430h1v1h-1zM2494,448h1v1h-1zM2494,465h1v1h-1zM2494,482h1v1h-1zM2494,499h1v1h-1zM2494,517h1v1h-1zM2494,534h1v1h-1zM2494,551h1v1h-1zM2494,569h1v1h-1zM2494,586h1v1h-1zM2494,603h1v1h-1zM2494,621h1v1h-1zM2494,638h1v1h-1zM2494,655h1v1h-1zM2494,672h1v1h-1zM2494,690h1v1h-1zM2494,707h1v1h-1zM2494,724h1v1h-1zM2494,742h1v1h-1zM2494,759h1v1h-1zM2494,776h1v1h-1zM2494,793h1v1h-1zM2494,811h1v1h-1zM2494,828h1v1h-1zM2494,845h1v1h-1zM2494,863h1v1h-1zM2494,880h1v1h-1zM2494,897h1v1h-1zM2511,33h1v1h-1zM2511,50h1v1h-1zM2511,67h1v1h-1zM2511,85h1v1h-1zM2511,102h1v1h-1zM2511,119h1v1h-1zM2511,136h1v1h-1zM2511,154h1v1h-1zM2511,171h1v1h-1zM2511,188h1v1h-1zM2511,206h1v1h-1zM2511,223h1v1h-1zM2511,240h1v1h-1zM2511,257h1v1h-1zM2511,275h1v1h-1zM2511,292h1v1h-1zM2511,309h1v1h-1zM2511,327h1v1h-1zM2511,344h1v1h-1zM2511,361h1v1h-1zM2511,378h1v1h-1zM2511,396h1v1h-1zM2511,413h1v1h-1zM2511,430h1v1h-1zM2511,448h1v1h-1zM2511,465h1v1h-1zM2511,482h1v1h-1zM2511,499h1v1h-1zM2511,517h1v1h-1zM2511,534h1v1h-1zM2511,551h1v1h-1zM2511,569h1v1h-1zM2511,586h1v1h-1zM2511,603h1v1h-1zM2511,621h1v1h-1zM2511,638h1v1h-1zM2511,655h1v1h-1zM2511,672h1v1h-1zM2511,690h1v1h-1zM2511,707h1v1h-1zM2511,724h1v1h-1zM2511,742h1v1h-1zM2511,759h1v1h-1zM2511,776h1v1h-1zM2511,793h1v1h-1zM2511,811h1v1h-1zM2511,828h1v1h-1zM2511,845h1v1h-1zM2511,863h1v1h-1zM2511,880h1v1h-1zM2511,897h1v1h-1zM2528,33h1v1h-1zM2528,50h1v1h-1zM2528,67h1v1h-1zM2528,85h1v1h-1zM2528,102h1v1h-1zM2528,119h1v1h-1zM2528,136h1v1h-1zM2528,154h1v1h-1zM2528,171h1v1h-1zM2528,188h1v1h-1zM2528,206h1v1h-1zM2528,223h1v1h-1zM2528,240h1v1h-1zM2528,257h1v1h-1zM2528,275h1v1h-1zM2528,292h1v1h-1zM2528,309h1v1h-1zM2528,327h1v1h-1zM2528,344h1v1h-1zM2528,361h1v1h-1zM2528,378h1v1h-1zM2528,396h1v1h-1zM2528,413h1v1h-1zM2528,430h1v1h-1zM2528,448h1v1h-1zM2528,465h1v1h-1zM2528,482h1v1h-1zM2528,499h1v1h-1zM2528,517h1v1h-1zM2528,534h1v1h-1zM2528,551h1v1h-1zM2528,569h1v1h-1zM2528,586h1v1h-1zM2528,603h1v1h-1zM2528,621h1v1h-1zM2528,638h1v1h-1zM2528,655h1v1h-1zM2528,672h1v1h-1zM2528,690h1v1h-1zM2528,707h1v1h-1zM2528,724h1v1h-1zM2528,742h1v1h-1zM2528,759h1v1h-1zM2528,776h1v1h-1zM2528,793h1v1h-1zM2528,811h1v1h-1zM2528,828h1v1h-1zM2528,845h1v1h-1zM2528,863h1v1h-1zM2528,880h1v1h-1zM2528,897h1v1h-1zM2546,33h1v1h-1zM2546,50h1v1h-1zM2546,67h1v1h-1zM2546,85h1v1h-1zM2546,102h1v1h-1zM2546,119h1v1h-1zM2546,136h1v1h-1zM2546,154h1v1h-1zM2546,171h1v1h-1zM2546,188h1v1h-1zM2546,206h1v1h-1zM2546,223h1v1h-1zM2546,240h1v1h-1zM2546,257h1v1h-1zM2546,275h1v1h-1zM2546,292h1v1h-1zM2546,309h1v1h-1zM2546,327h1v1h-1zM2546,344h1v1h-1zM2546,361h1v1h-1zM2546,378h1v1h-1zM2546,396h1v1h-1zM2546,413h1v1h-1zM2546,430h1v1h-1zM2546,448h1v1h-1zM2546,465h1v1h-1zM2546,482h1v1h-1zM2546,499h1v1h-1zM2546,517h1v1h-1zM2546,534h1v1h-1zM2546,551h1v1h-1zM2546,569h1v1h-1zM2546,586h1v1h-1zM2546,603h1v1h-1zM2546,621h1v1h-1zM2546,638h1v1h-1zM2546,655h1v1h-1zM2546,672h1v1h-1zM2546,690h1v1h-1zM2546,707h1v1h-1zM2546,724h1v1h-1zM2546,742h1v1h-1zM2546,759h1v1h-1zM2546,776h1v1h-1zM2546,793h1v1h-1zM2546,811h1v1h-1zM2546,828h1v1h-1zM2546,845h1v1h-1zM2546,863h1v1h-1zM2546,880h1v1h-1zM2546,897h1v1h-1z" fill="#b8b8b8"/>
<circle cx="1639.5" cy="171.5" r="27.3" fill="none" stroke="#00ff00" stroke-width="1" shape-rendering="crispEdges"/>
<path d="M1624.5,165.0 V178.0" stroke="#00ff00" stroke-width="1" shape-rendering="crispEdges"/>
<path d="M1647.0,171.5 H1660.0 M1653.5,165.0 V178.0" stroke="#00ff00" stroke-width="1" shape-rendering="crispEdges"/>
<rect x="1578" y="171" width="35" height="1" fill="#00ff00" />
<rect x="1666" y="171" width="34" height="1" fill="#00ff00" />
<rect x="1578" y="171" width="1" height="312" fill="#00ff00" />
<polygon points="1559.00,482.50 1598.00,482.50 1578.50,502.50 1559.00,482.50" fill="none" stroke="#00ff00" stroke-width="1" shape-rendering="crispEdges" />
<circle cx="1639.5" cy="327.5" r="27.3" fill="none" stroke="#00ff00" stroke-width="1" shape-rendering="crispEdges"/>
<path d="M1624.5,321.0 V334.0" stroke="#00ff00" stroke-width="1" shape-rendering="crispEdges"/>
<path d="M1647.0,327.5 H1660.0 M1653.5,321.0 V334.0" stroke="#00ff00" stroke-width="1" shape-rendering="crispEdges"/>
<rect x="1578" y="327" width="35" height="1" fill="#00ff00" />
<rect x="1666" y="327" width="34" height="1" fill="#00ff00" />
<rect x="1574" y="323" width="9" height="9" fill="#00ffff" />
<polygon points="1699.50,156.50 1740.00,156.50 1755.00,171.50 1740.00,186.50 1699.50,186.50 1699.50,156.50" fill="none" stroke="#00ff00" stroke-width="1" shape-rendering="crispEdges" />
<polygon points="1699.50,312.50 1759.00,312.50 1774.50,327.50 1759.00,342.50 1699.50,342.50 1699.50,312.50" fill="none" stroke="#00ff00" stroke-width="1" shape-rendering="crispEdges" />
<polygon points="2024.50,139.50 2064.50,139.50 2079.50,154.50 2064.50,169.50 2024.50,169.50 2024.50,139.50" fill="none" stroke="#00ff00" stroke-width="1" shape-rendering="crispEdges" />
<rect x="2080" y="154" width="86" height="1" fill="#00ff00" />
<rect x="2165" y="154" width="1" height="70" fill="#00ff00" />
<path d="M2165.50,223.00 C2174.50,223.00 2179.50,229.00 2179.00,235.00 C2178.50,238.00 2178.00,240.00 2177.00,241.00 C2180.00,245.00 2180.00,253.00 2177.00,257.50 C2179.50,263.00 2179.00,269.00 2175.50,272.00 C2172.50,274.00 2168.50,275.00 2165.50,275.00" fill="none" stroke="#00ff00" stroke-width="1" shape-rendering="crispEdges" />
<path d="M2153.50,240.70 C2159.50,233.70 2171.50,233.70 2178.00,240.70 C2171.50,247.70 2159.50,247.70 2153.50,240.70" fill="none" stroke="#00ff00" stroke-width="1" shape-rendering="crispEdges" />
<path d="M2153.50,257.80 C2159.50,250.80 2171.50,250.80 2178.00,257.80 C2171.50,264.80 2159.50,264.80 2153.50,257.80" fill="none" stroke="#00ff00" stroke-width="1" shape-rendering="crispEdges" />
<rect x="2165" y="275" width="1" height="277" fill="#00ff00" />
<circle cx="2154.2" cy="279.6" r="3.9" fill="none" stroke="#00ff00" stroke-width="1" shape-rendering="crispEdges"/>
<rect x="2161" y="323" width="9" height="9" fill="#00ffff" />
<rect x="2161" y="357" width="9" height="9" fill="#00ffff" />
<rect x="2062" y="327" width="104" height="1" fill="#00ff00" />
<rect x="2062" y="361" width="104" height="1" fill="#00ff00" />
<path d="M2200.5,206 V292.5 M2217.5,206 V292.5" stroke="#0000ff" stroke-width="1" shape-rendering="crispEdges" fill="none"/>
<rect x="2252" y="154" width="1" height="70" fill="#00ff00" />
<path d="M2252.50,223.00 C2243.50,223.00 2238.50,229.00 2239.00,235.00 C2239.50,238.00 2240.00,240.00 2241.00,241.00 C2238.00,245.00 2238.00,253.00 2241.00,257.50 C2238.50,263.00 2239.00,269.00 2242.50,272.00 C2245.50,274.00 2249.50,275.00 2252.50,275.00" fill="none" stroke="#00ff00" stroke-width="1" shape-rendering="crispEdges" />
<path d="M2264.50,240.70 C2258.50,233.70 2246.50,233.70 2240.00,240.70 C2246.50,247.70 2258.50,247.70 2264.50,240.70" fill="none" stroke="#00ff00" stroke-width="1" shape-rendering="crispEdges" />
<path d="M2264.50,257.80 C2258.50,250.80 2246.50,250.80 2240.00,257.80 C2246.50,264.80 2258.50,264.80 2264.50,257.80" fill="none" stroke="#00ff00" stroke-width="1" shape-rendering="crispEdges" />
<circle cx="2262.5" cy="279.6" r="3.9" fill="none" stroke="#00ff00" stroke-width="1" shape-rendering="crispEdges"/>
<rect x="2252" y="275" width="1" height="70" fill="#00ff00" />
<rect x="2252" y="154" width="174" height="1" fill="#00ff00" />
<rect x="2386" y="150" width="9" height="9" fill="#00ffff" />
<rect x="2390" y="154" width="1" height="64" fill="#00ff00" />
<polyline points="2390.50,217.00 2399.50,222.50 2382.50,233.40 2399.50,243.70 2382.50,254.60 2399.50,265.60 2382.50,276.50 2390.50,281.40" fill="none" stroke="#00ff00" stroke-width="1" shape-rendering="crispEdges" />
<rect x="2390" y="281" width="1" height="64" fill="#00ff00" />
<rect x="2252" y="344" width="139" height="1" fill="#00ff00" />
<rect x="2386" y="340" width="9" height="9" fill="#00ffff" />
<rect x="2390" y="344" width="1" height="35" fill="#00ff00" />
<polygon points="2371.00,378.50 2410.00,378.50 2390.50,398.50 2371.00,378.50" fill="none" stroke="#00ff00" stroke-width="1" shape-rendering="crispEdges" />
<polygon points="2425.50,139.50 2485.00,139.50 2499.50,154.50 2485.00,169.50 2425.50,169.50 2425.50,139.50" fill="none" stroke="#00ff00" stroke-width="1" shape-rendering="crispEdges" />
<polygon points="1939.50,448.50 1954.50,433.50 2027.50,433.50 2027.50,463.50 1954.50,463.50 1939.50,448.50" fill="none" stroke="#00ff00" stroke-width="1" shape-rendering="crispEdges" />
<rect x="2028" y="448" width="69" height="1" fill="#00ff00" />
<rect x="2096" y="448" width="1" height="139" fill="#00ff00" />
<rect x="2092" y="582" width="9" height="9" fill="#00ffff" />
<circle cx="1812.5" cy="586.5" r="27.3" fill="none" stroke="#00ff00" stroke-width="1" shape-rendering="crispEdges"/>
<path d="M1797.5,580.0 V593.0" stroke="#00ff00" stroke-width="1" shape-rendering="crispEdges"/>
<path d="M1820.0,586.5 H1833.0 M1826.5,580.0 V593.0" stroke="#00ff00" stroke-width="1" shape-rendering="crispEdges"/>
<circle cx="1812.5" cy="776.5" r="27.3" fill="none" stroke="#00ff00" stroke-width="1" shape-rendering="crispEdges"/>
<path d="M1797.5,770.0 V783.0" stroke="#00ff00" stroke-width="1" shape-rendering="crispEdges"/>
<path d="M1820.0,776.5 H1833.0 M1826.5,770.0 V783.0" stroke="#00ff00" stroke-width="1" shape-rendering="crispEdges"/>
<rect x="1716" y="586" width="70" height="1" fill="#00ff00" />
<rect x="1716" y="586" width="1" height="260" fill="#00ff00" />
<rect x="1712" y="772" width="9" height="9" fill="#00ffff" />
<polygon points="1697.00,845.50 1736.00,845.50 1716.50,865.50 1697.00,845.50" fill="none" stroke="#00ff00" stroke-width="1" shape-rendering="crispEdges" />
<rect x="1716" y="776" width="70" height="1" fill="#00ff00" />
<rect x="1839" y="776" width="137" height="1" fill="#00ff00" />
<rect x="1839" y="586" width="64" height="1" fill="#00ff00" />
<rect x="1902" y="569" width="1" height="35" fill="#00ff00" />
<rect x="1910" y="569" width="1" height="35" fill="#00ff00" />
<rect x="1910" y="586" width="66" height="1" fill="#00ff00" />
<rect x="1971" y="582" width="9" height="9" fill="#00ffff" />
<rect x="1975" y="586" width="30" height="1" fill="#00ff00" />
<polyline points="2003.50,586.50 2009.60,577.20 2020.40,595.70 2030.40,577.20 2041.40,595.70 2052.40,577.20 2063.50,595.70 2068.30,586.50" fill="none" stroke="#00ff00" stroke-width="1" shape-rendering="crispEdges" />
<rect x="2068" y="586" width="29" height="1" fill="#00ff00" />
<rect x="1975" y="586" width="1" height="81" fill="#00ff00" />
<polyline points="1975.50,666.00 1984.50,671.50 1967.50,682.40 1984.50,692.70 1967.50,703.60 1984.50,714.60 1967.50,725.50 1975.50,730.40" fill="none" stroke="#00ff00" stroke-width="1" shape-rendering="crispEdges" />
<rect x="1975" y="730" width="1" height="47" fill="#00ff00" />
<path d="M2114.5,561.6 A52.24,52.24 0 0 1 2217.8,561.6 L2217.8,593.7 A52.24,52.24 0 0 1 2114.5,593.7 Z" fill="none" stroke="#00ff00" stroke-width="1" shape-rendering="crispEdges"/>
<rect x="2144.5" y="551.5" width="43" height="5" fill="none" stroke="#00ff00" stroke-width="1" shape-rendering="crispEdges"/>
<rect x="2127" y="569" width="10" height="1" fill="#00ff00" />
<rect x="2144" y="569" width="10" height="1" fill="#00ff00" />
<rect x="2161" y="569" width="10" height="1" fill="#00ff00" />
<rect x="2178" y="569" width="10" height="1" fill="#00ff00" />
<rect x="2196" y="569" width="195" height="1" fill="#00ff00" />
<rect x="2096" y="586" width="41" height="1" fill="#00ff00" />
<rect x="2144" y="586" width="10" height="1" fill="#00ff00" />
<rect x="2161" y="586" width="10" height="1" fill="#00ff00" />
<rect x="2178" y="586" width="10" height="1" fill="#00ff00" />
<rect x="2196" y="586" width="10" height="1" fill="#00ff00" />
<polyline points="2131.50,608.50 2139.50,599.50 2191.50,599.50 2200.50,608.50" fill="none" stroke="#00ff00" stroke-width="1" shape-rendering="crispEdges" />
<rect x="2136" y="603" width="60" height="1" fill="#00ff00" />
<rect x="2131" y="608" width="1" height="113" fill="#00ff00" />
<rect x="2265" y="565" width="9" height="9" fill="#00ffff" />
<rect x="2352" y="565" width="9" height="9" fill="#00ffff" />
<rect x="2269" y="517" width="1" height="53" fill="#00ff00" />
<rect x="2269" y="517" width="53" height="1" fill="#00ff00" />
<rect x="2356" y="569" width="1" height="31" fill="#00ff00" />
<polyline points="2356.50,598.60 2365.50,604.10 2348.50,615.00 2365.50,625.30 2348.50,636.20 2365.50,647.20 2348.50,658.10 2356.50,663.00" fill="none" stroke="#00ff00" stroke-width="1" shape-rendering="crispEdges" />
<rect x="2356" y="663" width="1" height="46" fill="#00ff00" />
<polygon points="2356.50,708.00 2371.50,722.50 2371.50,781.50 2341.50,781.50 2341.50,722.50 2356.50,708.00" fill="none" stroke="#00ff00" stroke-width="1" shape-rendering="crispEdges" />
<polyline points="2131.50,720.00 2140.50,725.50 2123.50,736.40 2140.50,746.70 2123.50,757.60 2140.50,768.60 2123.50,779.50 2131.50,784.40" fill="none" stroke="#00ff00" stroke-width="1" shape-rendering="crispEdges" />
<rect x="2131" y="784" width="1" height="62" fill="#00ff00" />
<rect x="2127" y="807" width="9" height="9" fill="#00ffff" />
<rect x="2096" y="811" width="36" height="1" fill="#00ff00" />
<polygon points="2112.00,845.50 2151.00,845.50 2131.50,865.50 2112.00,845.50" fill="none" stroke="#00ff00" stroke-width="1" shape-rendering="crispEdges" />
<text transform="translate(31.50,15.00) scale(0.9744,1)" font-size="10.8" font-weight="bold" fill="#ffffff" >GU50 - FIXED BIAS - TRAN..raw</text>
<text transform="translate(1309.50,15.00) scale(0.9631,1)" font-size="10.8" font-weight="bold" fill="#ffffff" >GU50 - FIXED BIAS - TRAN..asc</text>
<text transform="translate(9.00,46.00) scale(0.9130,1)" font-size="14" font-weight="normal" fill="#d0d0d0" >40W</text>
<text transform="translate(9.00,130.00) scale(0.9130,1)" font-size="14" font-weight="normal" fill="#d0d0d0" >36W</text>
<text transform="translate(9.00,215.00) scale(0.9130,1)" font-size="14" font-weight="normal" fill="#d0d0d0" >32W</text>
<text transform="translate(9.00,299.00) scale(0.9130,1)" font-size="14" font-weight="normal" fill="#d0d0d0" >28W</text>
<text transform="translate(9.00,383.00) scale(0.9130,1)" font-size="14" font-weight="normal" fill="#d0d0d0" >24W</text>
<text transform="translate(9.00,467.00) scale(0.9130,1)" font-size="14" font-weight="normal" fill="#d0d0d0" >20W</text>
<text transform="translate(8.06,552.00) scale(0.9450,1)" font-size="14" font-weight="normal" fill="#d0d0d0" >16W</text>
<text transform="translate(8.06,636.00) scale(0.9450,1)" font-size="14" font-weight="normal" fill="#d0d0d0" >12W</text>
<text transform="translate(16.00,720.00) scale(0.9180,1)" font-size="14" font-weight="normal" fill="#d0d0d0" >8W</text>
<text transform="translate(16.00,805.00) scale(0.9180,1)" font-size="14" font-weight="normal" fill="#d0d0d0" >4W</text>
<text transform="translate(16.00,889.00) scale(0.9180,1)" font-size="14" font-weight="normal" fill="#d0d0d0" >0W</text>
<text transform="translate(26.00,905.00) scale(0.9443,1)" font-size="14" font-weight="normal" fill="#d0d0d0" >0.0ms</text>
<text transform="translate(147.00,905.00) scale(0.9443,1)" font-size="14" font-weight="normal" fill="#d0d0d0" >0.2ms</text>
<text transform="translate(268.00,905.00) scale(0.9443,1)" font-size="14" font-weight="normal" fill="#d0d0d0" >0.4ms</text>
<text transform="translate(389.00,905.00) scale(0.9443,1)" font-size="14" font-weight="normal" fill="#d0d0d0" >0.6ms</text>
<text transform="translate(510.00,905.00) scale(0.9443,1)" font-size="14" font-weight="normal" fill="#d0d0d0" >0.8ms</text>
<text transform="translate(631.03,905.00) scale(0.9697,1)" font-size="14" font-weight="normal" fill="#d0d0d0" >1.0ms</text>
<text transform="translate(752.03,905.00) scale(0.9697,1)" font-size="14" font-weight="normal" fill="#d0d0d0" >1.2ms</text>
<text transform="translate(873.03,905.00) scale(0.9697,1)" font-size="14" font-weight="normal" fill="#d0d0d0" >1.4ms</text>
<text transform="translate(994.03,905.00) scale(0.9697,1)" font-size="14" font-weight="normal" fill="#d0d0d0" >1.6ms</text>
<text transform="translate(1115.03,905.00) scale(0.9697,1)" font-size="14" font-weight="normal" fill="#d0d0d0" >1.8ms</text>
<text transform="translate(1237.00,905.00) scale(0.9443,1)" font-size="14" font-weight="normal" fill="#d0d0d0" >2.0ms</text>
<text transform="translate(607.09,36.00) scale(0.9131,1)" font-size="14" font-weight="normal" fill="#ff0000" >I(R22)*V(OUT)</text>
<text transform="translate(702.00,131.00) scale(0.9362,1)" font-size="12.5" font-weight="bold" fill="#ffffff" filter="url(#glow)">Waveform: I(R22)*V(OUT)</text>
<text transform="translate(712.61,161.00) scale(0.8854,1)" font-size="12" font-weight="normal" fill="#101010" >Interval Start:</text>
<text transform="translate(848.00,161.00) scale(0.8551,1)" font-size="11.5" font-weight="normal" fill="#101010" >0s</text>
<text transform="translate(715.10,186.00) scale(0.9010,1)" font-size="12" font-weight="normal" fill="#101010" >Interval End:</text>
<text transform="translate(843.90,186.00) scale(0.8555,1)" font-size="11.5" font-weight="normal" fill="#101010" >2ms</text>
<text transform="translate(737.00,210.00) scale(0.8109,1)" font-size="12" font-weight="normal" fill="#101010" >Average:</text>
<text transform="translate(831.85,210.00) scale(0.9291,1)" font-size="11.5" font-weight="normal" fill="#101010" >21.419W</text>
<text transform="translate(738.13,234.00) scale(0.8685,1)" font-size="12" font-weight="normal" fill="#101010" >Integral:</text>
<text transform="translate(830.60,234.00) scale(0.9125,1)" font-size="11.5" font-weight="normal" fill="#101010" >42.839mJ</text>
<text transform="translate(1620.60,137.70) scale(0.9941,1)" font-size="27" font-weight="bold" fill="#ffffff" >VA</text>
<text transform="translate(1606.00,223.50) scale(1.1355,1)" font-size="27" font-weight="bold" fill="#ffffff" >{Vq}</text>
<text transform="translate(1613.80,293.00) scale(0.9938,1)" font-size="27" font-weight="bold" fill="#ffffff" >Vg2</text>
<text transform="translate(1607.50,379.20) scale(1.1355,1)" font-size="27" font-weight="bold" fill="#ffffff" >{sg}</text>
<text transform="translate(1702.50,180.30) scale(0.9498,1)" font-size="27" font-weight="bold" fill="#ffffff" >Vp</text>
<text transform="translate(1702.50,335.80) scale(0.9564,1)" font-size="27" font-weight="bold" fill="#ffffff" >VG2</text>
<text transform="translate(1292.48,181.00) scale(1.0199,1)" font-size="27" font-weight="bold" fill="#ffff00" >.param Vq=390V</text>
<text transform="translate(1292.48,215.70) scale(1.0153,1)" font-size="27" font-weight="bold" fill="#ffff00" >.param sg=248V</text>
<text transform="translate(1292.50,249.50) scale(1.0031,1)" font-size="27" font-weight="bold" fill="#ffff00" >.param Rload=5k</text>
<text transform="translate(1292.51,284.50) scale(0.9885,1)" font-size="27" font-weight="bold" fill="#ffff00" >.param RScreen=1k</text>
<text transform="translate(1327.52,326.70) scale(0.9820,1)" font-size="27" font-weight="bold" fill="#ffff00" >.inc GU50.txt</text>
<text transform="translate(1327.49,352.90) scale(1.0075,1)" font-size="27" font-weight="bold" fill="#ffff00" >.tran 2m</text>
<text transform="translate(2031.20,163.40) scale(0.9645,1)" font-size="27" font-weight="bold" fill="#ffffff" >Vp</text>
<text transform="translate(2120.47,238.60) scale(0.9314,1)" font-size="27" font-weight="bold" fill="#ffffff" >L3</text>
<text transform="translate(1950.80,276.50) scale(1.1560,1)" font-size="27" font-weight="bold" fill="#ffffff" >{{Rload}/100}</text>
<text transform="translate(1885.30,336.90) scale(1.0344,1)" font-size="27" font-weight="bold" fill="#00ffff" >90.223409mA</text>
<text transform="translate(1909.50,370.90) scale(1.0458,1)" font-size="27" font-weight="bold" fill="#00ffff" >389.90978V</text>
<text transform="translate(2187.60,192.00) scale(1.0781,1)" font-size="10" font-weight="bold" fill="#ffff00" >K2 L3 L4 1</text>
<text transform="translate(2427.59,163.40) scale(0.9115,1)" font-size="27" font-weight="bold" fill="#ffffff" >OUT</text>
<text transform="translate(2270.27,238.70) scale(0.9314,1)" font-size="27" font-weight="bold" fill="#ffffff" >L4</text>
<text transform="translate(2268.60,268.80) scale(1.0244,1)" font-size="27" font-weight="bold" fill="#ffffff" >80mH</text>
<text transform="translate(2411.99,241.20) scale(1.0102,1)" font-size="27" font-weight="bold" fill="#ffffff" >R22</text>
<text transform="translate(2413.00,278.30) scale(0.9867,1)" font-size="27" font-weight="bold" fill="#ffffff" >8</text>
<text transform="translate(1957.79,458.30) scale(1.0080,1)" font-size="27" font-weight="bold" fill="#ffffff" >input</text>
<text transform="translate(1795.80,510.00) scale(0.9535,1)" font-size="27" font-weight="bold" fill="#ffffff" >Vg3</text>
<text transform="translate(1658.00,544.10) scale(1.0303,1)" font-size="27" font-weight="bold" fill="#ffffff" >SINE(0 28V 1k)</text>
<text transform="translate(1765.45,743.30) scale(0.9529,1)" font-size="27" font-weight="bold" fill="#ffffff" >FixBias</text>
<text transform="translate(1769.60,827.00) scale(1.1094,1)" font-size="27" font-weight="bold" fill="#ffffff" >{bias}</text>
<text transform="translate(1888.30,563.00) scale(0.9970,1)" font-size="27" font-weight="bold" fill="#ffffff" >C2</text>
<text transform="translate(1882.40,626.30) scale(1.0459,1)" font-size="27" font-weight="bold" fill="#ffffff" >47n</text>
<text transform="translate(2018.92,570.80) scale(0.9791,1)" font-size="27" font-weight="bold" fill="#ffffff" >R4</text>
<text transform="translate(2009.00,618.90) scale(1.0031,1)" font-size="27" font-weight="bold" fill="#ffffff" >4.7k</text>
<text transform="translate(1919.82,686.10) scale(0.9762,1)" font-size="27" font-weight="bold" fill="#ffffff" >R3</text>
<text transform="translate(1892.40,724.50) scale(1.0156,1)" font-size="27" font-weight="bold" fill="#ffffff" >220k</text>
<text transform="translate(2174.00,503.00) scale(1.0362,1)" font-size="10" font-weight="bold" fill="#ffffff" >U5</text>
<text transform="translate(2138.60,658.50) scale(1.0579,1)" font-size="10" font-weight="bold" fill="#ffffff" >GU50</text>
<text transform="translate(2322.30,526.20) scale(1.0238,1)" font-size="27" font-weight="bold" fill="#00ffff" >4.8216358mA</text>
<text transform="translate(2391.70,577.30) scale(1.0238,1)" font-size="27" font-weight="bold" fill="#00ffff" >243.17354V</text>
<text transform="translate(2376.72,621.20) scale(0.9781,1)" font-size="27" font-weight="bold" fill="#ffffff" >RS2</text>
<text transform="translate(2377.70,660.40) scale(1.0307,1)" font-size="27" font-weight="bold" fill="#ffffff" >{Rscreen}</text>
<text transform="translate(2152.27,743.40) scale(0.9284,1)" font-size="27" font-weight="bold" fill="#ffffff" >R1</text>
<text transform="translate(2152.19,781.70) scale(1.0071,1)" font-size="27" font-weight="bold" fill="#ffffff" >1</text>
<text transform="translate(1907.96,819.70) scale(1.0441,1)" font-size="27" font-weight="bold" fill="#00ffff" >-95.045045mA</text>
<text transform="translate(2364,774) rotate(-90)" font-size="26.5" font-weight="bold" fill="#ffffff" textLength="52" lengthAdjust="spacingAndGlyphs">VG2</text>
</svg>
</body></html>
